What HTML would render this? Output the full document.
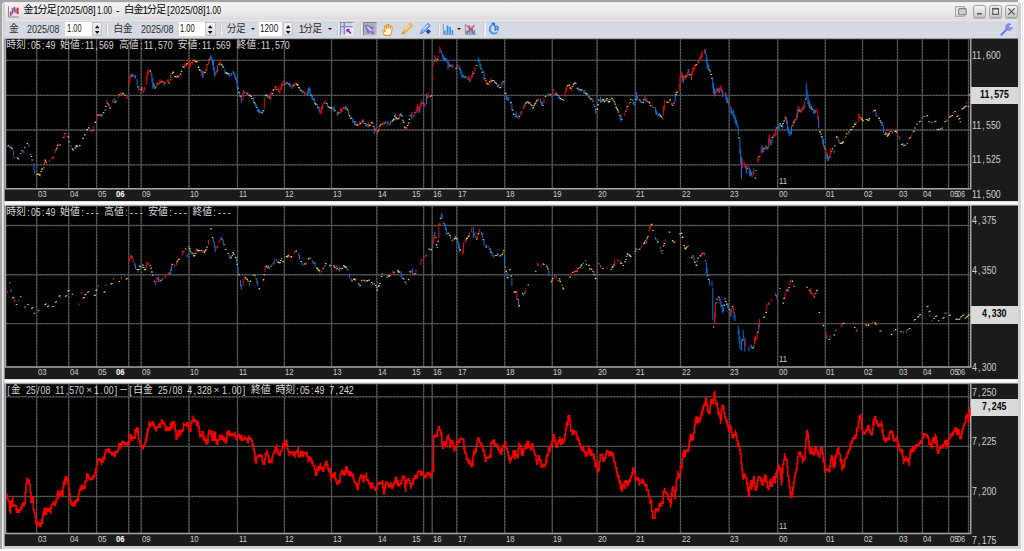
<!DOCTYPE html><html lang="ja"><head><meta charset="utf-8"><title>chart</title><style>
html,body{margin:0;padding:0}
body{width:1024px;height:551px;overflow:hidden;background:#fbfbfb;position:relative;font-family:"Liberation Sans",sans-serif}
#frame{position:absolute;left:0;top:0;width:1018.4px;height:548.6px;background:#a4a4a4}
#frame:before{content:"";position:absolute;left:1.7px;top:1.7px;width:1019.7px;height:547.5px;background:#d2d2d2;border-radius:3.5px 3px 0 0;box-shadow:inset 1px 1px 0 #e9e9e9}
#rline{position:absolute;left:1022.4px;top:2px;width:1px;height:547px;background:#e3e6ea}
#title{position:absolute;left:4.6px;top:2.8px;width:1013.8px;height:17.1px;background:linear-gradient(#f4f4f4,#ececec 40%,#dddddd)}
#tb{position:absolute;left:4.6px;top:19.9px;width:1013.8px;height:18.5px;background:#d4d9e2;border-top:1px solid #e6e9ee;box-sizing:border-box}
#charts{position:absolute;left:0;top:0}
.split{position:absolute;left:4.6px;width:1013.4px;height:4.4px;background:linear-gradient(#cfcfcf,#fff 30%,#fff 70%,#cfcfcf)}
.k,.ic{position:absolute;overflow:visible}
.t{position:absolute;white-space:pre;transform-origin:0 0;letter-spacing:0}
.m i{display:inline-block;width:.55615em;text-align:center;font-style:normal}
.pbox{position:absolute;left:971.4px;width:46.6px;background:#dadada}
.cb{position:absolute;top:4.8px;height:13.2px;border:1px solid #9e9e9e;border-radius:2.6px;box-sizing:border-box;background:linear-gradient(#f4f4f4,#dfdfdf 50%,#c9c9c9);box-shadow:0 .6px .8px rgba(0,0,0,.18)}
.inp{position:absolute;top:22.4px;height:13.8px;background:#fff}
.spin{position:absolute;top:22.4px;width:10.6px;height:13.8px;background:linear-gradient(#f2f2f2,#dcdcdc);border:1px solid #c2c6cc;box-sizing:border-box}
.sep{position:absolute;top:23px;width:1.3px;height:12.6px;background:#eef0f4;box-shadow:-.6px 0 0 #bcc1ca}
.dd{position:absolute;top:27.6px;width:0;height:0;border-left:2.1px solid transparent;border-right:2.1px solid transparent;border-top:2.6px solid #161616}
</style></head><body>
<div id="frame"></div><div id="rline"></div>
<svg id="charts" width="1024" height="551" viewBox="0 0 1024 551"><rect x="4.6" y="38.6" width="1013.4" height="162.4" fill="#1b1b1b"/><rect x="5.5" y="38.6" width="965.2" height="150.1" fill="#000"/><rect x="4.6" y="205.6" width="1013.4" height="173.4" fill="#1b1b1b"/><rect x="5.5" y="205.6" width="965.2" height="161.3" fill="#000"/><rect x="4.6" y="383.6" width="1013.4" height="162.4" fill="#1b1b1b"/><rect x="5.5" y="383.6" width="965.2" height="150.0" fill="#000"/><path d="M36.7 39.6V188.7M68.7 39.6V188.7M96.6 39.6V188.7M128.7 39.6V188.7M141.2 39.6V188.7M189.0 39.6V188.7M237.5 39.6V188.7M284.4 39.6V188.7M331.5 39.6V188.7M376.8 39.6V188.7M423.6 39.6V188.7M432.2 39.6V188.7M456.8 39.6V188.7M504.7 39.6V188.7M552.3 39.6V188.7M597.1 39.6V188.7M635.3 39.6V188.7M680.5 39.6V188.7M729.2 39.6V188.7M777.7 39.6V188.7M825.3 39.6V188.7M862.5 39.6V188.7M897.5 39.6V188.7M922.4 39.6V188.7M948.6 39.6V188.7M968.5 39.6V188.7M36.7 206.6V366.9M68.7 206.6V366.9M96.6 206.6V366.9M128.7 206.6V366.9M141.2 206.6V366.9M189.0 206.6V366.9M237.5 206.6V366.9M284.4 206.6V366.9M331.5 206.6V366.9M376.8 206.6V366.9M423.6 206.6V366.9M432.2 206.6V366.9M456.8 206.6V366.9M504.7 206.6V366.9M552.3 206.6V366.9M597.1 206.6V366.9M635.3 206.6V366.9M680.5 206.6V366.9M729.2 206.6V366.9M777.7 206.6V366.9M825.3 206.6V366.9M862.5 206.6V366.9M897.5 206.6V366.9M922.4 206.6V366.9M948.6 206.6V366.9M968.5 206.6V366.9M36.7 384.6V533.6M68.7 384.6V533.6M96.6 384.6V533.6M128.7 384.6V533.6M141.2 384.6V533.6M189.0 384.6V533.6M237.5 384.6V533.6M284.4 384.6V533.6M331.5 384.6V533.6M376.8 384.6V533.6M423.6 384.6V533.6M432.2 384.6V533.6M456.8 384.6V533.6M504.7 384.6V533.6M552.3 384.6V533.6M597.1 384.6V533.6M635.3 384.6V533.6M680.5 384.6V533.6M729.2 384.6V533.6M777.7 384.6V533.6M825.3 384.6V533.6M862.5 384.6V533.6M897.5 384.6V533.6M922.4 384.6V533.6M948.6 384.6V533.6M968.5 384.6V533.6M6.0 60.3H970.7M6.0 95.4H970.7M6.0 130.0H970.7M6.0 164.9H970.7M6.0 225.5H970.7M6.0 274.7H970.7M6.0 323.6H970.7M6.0 396.8H970.7M6.0 446.4H970.7M6.0 496.5H970.7" stroke="#404040" stroke-width="1.35" fill="none"/><path d="M36.7 39.6V188.7M68.7 39.6V188.7M96.6 39.6V188.7M128.7 39.6V188.7M141.2 39.6V188.7M189.0 39.6V188.7M237.5 39.6V188.7M284.4 39.6V188.7M331.5 39.6V188.7M376.8 39.6V188.7M423.6 39.6V188.7M432.2 39.6V188.7M456.8 39.6V188.7M504.7 39.6V188.7M552.3 39.6V188.7M597.1 39.6V188.7M635.3 39.6V188.7M680.5 39.6V188.7M729.2 39.6V188.7M777.7 39.6V188.7M825.3 39.6V188.7M862.5 39.6V188.7M897.5 39.6V188.7M922.4 39.6V188.7M948.6 39.6V188.7M968.5 39.6V188.7M36.7 206.6V366.9M68.7 206.6V366.9M96.6 206.6V366.9M128.7 206.6V366.9M141.2 206.6V366.9M189.0 206.6V366.9M237.5 206.6V366.9M284.4 206.6V366.9M331.5 206.6V366.9M376.8 206.6V366.9M423.6 206.6V366.9M432.2 206.6V366.9M456.8 206.6V366.9M504.7 206.6V366.9M552.3 206.6V366.9M597.1 206.6V366.9M635.3 206.6V366.9M680.5 206.6V366.9M729.2 206.6V366.9M777.7 206.6V366.9M825.3 206.6V366.9M862.5 206.6V366.9M897.5 206.6V366.9M922.4 206.6V366.9M948.6 206.6V366.9M968.5 206.6V366.9M36.7 384.6V533.6M68.7 384.6V533.6M96.6 384.6V533.6M128.7 384.6V533.6M141.2 384.6V533.6M189.0 384.6V533.6M237.5 384.6V533.6M284.4 384.6V533.6M331.5 384.6V533.6M376.8 384.6V533.6M423.6 384.6V533.6M432.2 384.6V533.6M456.8 384.6V533.6M504.7 384.6V533.6M552.3 384.6V533.6M597.1 384.6V533.6M635.3 384.6V533.6M680.5 384.6V533.6M729.2 384.6V533.6M777.7 384.6V533.6M825.3 384.6V533.6M862.5 384.6V533.6M897.5 384.6V533.6M922.4 384.6V533.6M948.6 384.6V533.6M968.5 384.6V533.6M6.0 60.3H970.7M6.0 95.4H970.7M6.0 130.0H970.7M6.0 164.9H970.7M6.0 225.5H970.7M6.0 274.7H970.7M6.0 323.6H970.7M6.0 396.8H970.7M6.0 446.4H970.7M6.0 496.5H970.7" stroke="#646464" stroke-width="1.0" stroke-dasharray="1.55 1.55" fill="none"/><path d="M5.5 38.6V188.7H970.7V38.6" fill="none" stroke="#a9a9a9" stroke-width="1.5"/><path d="M4.6 38.7H971.3" stroke="#b9b9b9" stroke-width="1.0"/><path d="M5.5 205.6V366.9H970.7V205.6" fill="none" stroke="#a9a9a9" stroke-width="1.5"/><path d="M4.6 205.7H971.3" stroke="#b9b9b9" stroke-width="1.0"/><path d="M5.5 383.6V533.6H970.7V383.6" fill="none" stroke="#a9a9a9" stroke-width="1.5"/><path d="M4.6 383.7H971.3" stroke="#b9b9b9" stroke-width="1.0"/><path d="M8.4 145.1V146.3M10.1 146.4V147.7M11.7 147.6V148.7M12.5 148.5V149.3M14.2 156.7V157.6M17.5 157.2V158.2M18.3 158.2V159.5M20.7 153.2V154.0M21.6 150.0V150.7M24.8 147.2V148.2M27.3 142.9V143.9M30.6 154.2V154.9M31.4 156.0V157.0M32.2 159.4V160.6M36.3 174.4V175.1M38.0 173.6V175.0M38.8 173.6V174.8M39.6 174.4V175.8M41.2 171.1V172.1M42.1 168.3V169.8M43.7 167.4V168.2M45.3 159.6V160.9M46.2 161.6V162.7M52.7 157.4V158.1M56.0 149.5V150.4M56.8 147.4V148.8M57.6 144.8V146.1M60.1 144.6V145.6M63.4 137.0V137.8M65.0 133.2V134.1M68.3 136.2V137.6M69.1 141.2V142.2M70.8 145.7V146.4M72.4 148.3V149.5M73.2 149.2V150.6M74.9 147.8V148.6M75.7 146.6V147.4M76.5 145.0V146.1M77.3 145.7V147.0M79.8 145.0V146.2M83.1 137.7V139.0M84.7 134.2V135.6M87.2 129.0V130.5M88.8 127.3V128.4M92.9 130.0V130.9M95.4 121.6V123.0M97.8 114.4V115.5M98.6 114.8V115.8M100.3 114.6V115.4M101.9 114.2V115.6M103.6 112.0V113.2M105.2 109.7V110.5M106.0 106.1V107.1M107.7 102.7V103.7M108.5 104.2V105.1M110.1 107.2V108.5M115.0 102.1V103.1M115.9 100.4V101.6M119.1 94.2V94.9M120.0 94.4V95.2M122.4 93.4V94.4M123.2 92.7V94.1M124.9 94.7V96.1M131.4 75.1V76.5M138.0 86.2V87.4M141.3 88.8V90.1M142.1 87.5V88.2M150.3 70.2V71.7M155.2 87.6V88.6M156.0 86.4V87.2M157.7 83.3V84.5M161.0 81.4V82.8M162.6 81.0V81.8M165.1 82.6V83.6M169.2 82.3V83.6M172.4 72.9V74.0M173.3 71.6V72.9M174.9 76.0V77.3M175.7 75.9V77.2M177.4 75.6V76.8M178.2 76.0V77.3M180.6 73.4V74.7M181.5 70.7V71.9M183.1 66.2V67.3M183.9 66.7V67.7M185.6 65.6V66.3M186.4 63.5V64.8M187.2 63.1V64.0M192.1 62.1V63.1M193.8 59.7V61.1M195.4 60.6V61.9M196.2 61.7V62.6M197.0 61.2V62.3M198.7 66.6V67.9M199.5 69.3V70.6M200.3 70.2V71.1M204.4 72.1V73.1M205.2 71.7V72.7M206.1 69.5V70.4M207.7 64.5V65.3M209.3 58.8V59.7M219.2 63.6V65.1M221.6 64.1V65.5M223.3 66.3V67.8M225.7 72.8V73.7M226.6 72.1V73.3M227.4 72.9V74.0M228.2 73.1V74.4M238.0 87.4V88.7M238.9 91.7V93.0M240.5 95.6V97.0M244.6 92.3V93.1M247.1 92.7V94.2M249.5 94.6V96.0M250.3 95.4V96.3M251.2 96.1V97.0M252.0 97.9V99.1M254.4 101.9V103.4M256.9 107.0V108.1M261.8 111.9V113.1M263.5 110.0V111.2M265.9 95.1V96.2M266.7 94.5V95.9M269.2 96.4V97.6M270.0 97.7V98.6M272.5 93.0V94.0M273.3 89.4V90.8M274.1 88.9V89.9M275.8 86.6V87.5M276.6 88.8V89.7M282.3 84.5V85.5M285.6 83.7V84.6M287.2 82.5V83.4M288.1 82.9V83.6M288.9 83.9V84.7M293.8 84.6V85.9M296.3 83.2V84.0M297.1 84.1V85.4M297.9 84.6V85.7M298.7 87.1V88.2M299.5 87.6V88.5M300.4 89.4V90.5M301.2 90.2V91.1M302.8 91.2V92.4M306.9 93.8V94.6M311.0 94.6V95.9M313.5 98.9V99.8M315.1 102.7V103.8M315.9 103.6V105.0M318.4 107.1V108.1M324.1 102.8V103.5M326.6 102.9V103.9M328.2 106.0V106.8M329.1 107.2V108.2M329.9 106.8V107.9M330.7 107.5V108.4M331.5 107.1V107.8M332.3 108.5V109.3M334.8 109.7V111.2M338.1 112.5V113.8M338.9 112.6V113.5M343.8 107.6V108.6M347.1 108.6V109.6M347.9 109.8V110.8M349.6 115.0V116.5M350.4 117.6V118.6M351.2 117.4V118.7M353.7 121.3V122.1M356.1 123.8V124.7M356.9 125.0V125.7M357.8 124.3V125.4M360.2 122.9V124.3M361.0 122.4V123.3M362.7 120.8V122.2M365.1 123.1V123.9M366.0 124.7V125.6M367.6 124.3V125.1M369.2 124.8V126.2M370.1 124.8V126.0M371.7 122.3V123.4M372.5 122.3V123.5M373.3 125.9V126.7M375.0 128.8V130.2M378.3 130.0V131.4M379.9 125.6V126.7M380.7 124.2V125.2M382.4 123.5V124.4M384.8 122.5V123.5M392.2 120.7V121.7M393.0 119.8V121.0M393.8 118.6V119.9M394.7 115.6V116.7M396.3 117.0V118.3M397.1 118.2V119.3M397.9 118.6V119.6M398.8 118.1V118.8M400.4 114.1V115.6M402.0 115.3V116.6M402.9 119.7V120.8M403.7 121.4V122.9M404.5 126.6V127.6M405.3 127.0V128.5M407.8 125.0V126.0M408.6 122.6V123.7M409.4 118.7V119.9M410.2 114.9V115.7M415.2 112.2V113.1M422.5 102.7V103.5M427.5 96.5V97.4M430.7 95.9V96.8M431.6 95.0V95.8M434.0 60.4V61.3M436.5 60.7V61.6M437.3 58.8V60.1M444.7 58.1V59.2M449.6 65.8V66.5M450.4 64.8V65.8M456.2 67.8V68.9M465.2 76.5V77.4M473.4 72.7V74.0M476.7 65.0V65.9M481.6 68.6V69.5M482.4 71.6V72.7M484.9 78.1V78.9M485.7 80.3V81.2M487.3 83.1V84.0M488.1 83.6V84.8M489.8 81.1V82.6M491.4 80.9V81.8M492.2 80.0V80.9M493.9 80.1V81.1M495.5 82.1V83.3M496.3 82.9V84.0M498.0 85.3V86.7M499.6 87.2V88.3M500.4 87.1V88.0M503.7 81.3V82.2M505.4 92.7V94.0M511.1 102.0V103.3M512.7 109.5V110.7M513.6 113.5V114.9M517.7 116.9V117.6M519.3 115.8V116.9M525.0 104.7V105.8M525.9 102.2V103.7M527.5 101.2V102.4M528.3 101.7V102.8M529.1 102.5V103.7M530.0 102.6V103.4M530.8 104.3V105.1M531.6 104.9V106.3M533.2 107.1V108.6M534.1 104.8V106.2M534.9 103.2V104.6M535.7 102.5V103.5M536.5 100.8V101.7M537.3 99.5V100.8M543.1 105.0V106.0M545.5 95.9V97.1M550.5 93.9V95.2M555.4 93.5V94.8M557.0 93.7V94.8M557.8 95.0V95.8M560.3 97.8V99.2M561.9 98.9V99.9M563.6 99.4V100.5M567.7 85.0V86.5M569.3 84.6V85.8M570.1 87.2V88.6M571.0 88.1V88.9M572.6 86.1V87.0M573.4 84.3V85.3M574.2 82.9V83.9M575.1 81.9V82.6M575.9 83.0V83.8M577.5 87.7V89.1M579.2 88.9V89.9M580.8 89.2V90.5M581.6 89.4V90.8M585.7 92.5V94.0M586.5 93.7V94.5M587.4 93.6V94.7M589.0 96.3V97.4M590.6 98.2V99.4M591.5 98.3V99.5M593.9 104.6V105.3M594.7 106.1V106.8M597.2 108.5V109.9M598.0 103.9V105.2M598.8 99.6V100.7M602.1 100.3V101.6M602.9 98.8V99.8M603.8 99.4V100.8M604.6 101.1V102.3M606.2 99.5V100.8M607.0 97.9V99.2M607.9 100.4V101.3M608.7 101.2V102.5M609.5 100.7V102.0M610.3 99.3V100.0M612.0 97.8V99.1M612.8 99.5V100.2M613.6 99.7V100.6M614.4 101.3V102.4M615.2 103.6V104.7M616.1 106.5V107.7M616.9 107.9V109.3M617.7 109.5V111.0M618.5 111.5V112.5M619.3 114.9V115.8M621.8 118.7V119.9M625.9 110.8V111.6M627.5 105.7V107.1M630.0 102.0V102.7M630.8 99.0V99.9M635.7 99.1V100.0M639.8 99.6V100.8M643.1 101.8V103.1M643.9 99.1V100.2M647.2 100.8V101.8M648.9 101.6V102.8M649.7 102.3V103.5M650.5 105.1V106.1M653.8 106.9V107.6M660.3 114.8V116.1M661.2 115.9V117.1M662.0 117.3V118.1M666.9 101.4V102.4M667.7 101.9V102.9M670.2 99.3V100.7M671.8 103.6V104.4M672.6 105.2V106.1M674.3 102.6V103.5M675.9 93.8V95.2M676.7 91.8V93.0M677.6 91.4V92.3M685.8 76.1V77.3M686.6 75.4V76.3M689.9 73.9V75.3M695.6 65.1V66.1M696.4 64.1V65.1M709.5 69.5V70.7M710.4 71.4V72.3M711.2 74.1V74.9M712.0 77.7V79.1M717.7 89.4V90.7M732.5 111.7V112.5M739.1 137.3V138.6M747.3 168.2V169.1M755.5 177.5V178.8M756.3 170.2V171.0M759.6 155.9V157.0M764.5 148.3V149.0M766.1 146.5V147.6M767.8 147.4V148.6M772.7 136.8V138.0M776.8 127.3V128.8M780.1 123.3V124.5M780.9 125.2V126.2M781.7 125.5V126.9M783.3 123.1V124.1M784.2 120.2V121.7M785.8 117.6V118.8M789.9 132.4V133.1M792.4 125.2V126.1M794.0 121.6V123.0M794.8 119.8V120.5M795.6 119.6V120.3M799.7 109.8V111.2M805.5 98.8V99.8M811.2 106.6V107.7M812.0 108.3V109.8M820.2 131.1V132.6M821.1 133.4V134.5M821.9 136.1V137.5M824.3 146.4V147.6M825.2 148.5V149.4M829.3 156.4V157.5M831.7 150.9V151.7M832.5 148.3V149.4M835.0 145.6V146.4M836.6 136.3V137.7M837.5 136.7V137.6M839.9 142.5V143.3M840.7 143.2V144.0M841.6 142.8V144.1M842.4 142.0V143.5M843.2 141.3V142.6M845.7 136.5V137.3M846.5 133.3V134.2M848.9 131.4V132.6M850.6 129.3V130.2M851.4 129.0V130.0M853.0 126.4V127.6M853.9 125.9V126.7M854.7 123.5V125.0M855.5 123.6V124.8M856.3 121.9V122.6M861.2 117.4V118.6M862.1 119.1V120.3M862.9 119.9V121.3M866.2 119.0V119.8M867.0 118.9V120.0M867.8 119.6V120.6M868.6 120.0V120.9M869.4 118.1V119.4M874.4 110.3V111.3M875.2 109.8V111.3M876.8 115.4V116.3M879.3 117.7V119.0M880.1 120.2V121.1M880.9 121.5V122.8M885.0 134.0V134.9M885.8 132.5V133.7M886.7 133.5V134.2M887.5 135.3V136.7M888.3 134.0V135.4M889.1 132.8V134.3M890.8 130.9V131.7M894.9 131.0V132.0M895.7 130.4V131.7M896.5 131.4V132.7M901.8 144.1V145.0M902.7 143.5V144.4M903.6 145.4V146.3M904.5 144.8V145.7M907.4 142.9V143.8M909.5 137.8V138.7M910.4 137.2V138.1M913.3 131.4V132.3M914.2 130.8V131.7M915.1 127.6V128.5M917.1 123.8V124.7M919.6 121.3V122.2M920.5 120.7V121.6M924.0 116.2V117.1M926.5 115.7V116.6M927.4 115.1V116.0M929.0 121.3V122.2M931.6 121.8V122.7M934.9 121.3V122.2M935.8 120.7V121.6M937.4 129.4V130.3M938.3 128.8V129.7M940.0 128.9V129.8M940.9 128.3V129.2M945.1 121.3V122.2M946.0 120.7V121.6M949.4 116.7V117.6M950.3 116.1V117.0M951.4 115.7V116.6M952.3 115.1V116.0M955.2 111.1V112.0M957.0 116.2V117.1M957.9 115.6V116.5M958.8 118.7V119.6M959.7 118.1V119.0M960.3 121.3V122.2M962.1 108.6V109.5M963.0 108.0V108.9M963.9 107.3V108.2M964.8 106.7V107.6M965.4 106.0V106.9M966.3 105.4V106.3M968.4 106.0V106.9M969.2 94.6V95.5M970.1 94.0V94.9" stroke="#dcd266" stroke-width="1.5" fill="none"/><path d="M7.6 145.2V146.7M10.9 145.7V148.8M13.4 150.7V155.7M19.1 159.0V159.6M22.4 150.9V152.6M23.2 150.2V152.2M24.0 151.7V153.6M28.9 144.1V147.0M33.9 163.5V170.0M34.7 169.4V173.7M79.0 146.3V147.1M90.4 129.9V131.6M101.1 114.0V117.0M109.3 104.9V107.5M114.2 98.0V103.4M124.1 93.8V95.6M132.3 73.1V76.2M133.1 74.6V77.3M134.7 75.1V77.4M135.5 75.4V78.5M137.2 79.0V85.2M138.8 85.6V90.4M143.7 90.4V92.9M151.1 71.6V75.4M151.9 73.5V82.1M152.8 77.8V88.8M153.6 82.6V87.3M154.4 83.8V88.8M164.2 81.3V85.7M176.5 76.0V78.3M201.1 70.1V72.6M202.0 70.0V76.7M202.8 71.7V78.3M210.2 56.1V58.5M211.0 54.9V59.2M211.8 56.9V60.2M212.6 59.4V65.1M213.4 59.9V70.7M214.3 66.8V76.2M215.1 71.6V76.3M217.5 65.3V71.8M222.5 64.2V67.5M224.9 68.9V73.6M229.0 73.5V76.3M229.8 73.1V76.7M231.5 73.1V75.8M233.1 70.6V74.7M233.9 71.7V75.0M234.8 72.9V77.2M235.6 75.9V80.1M236.4 77.5V83.1M237.2 81.4V87.8M239.7 92.2V96.5M241.3 95.3V102.4M247.9 91.9V94.7M253.6 97.3V102.3M255.3 102.7V106.3M256.1 104.1V107.5M257.7 108.9V111.7M258.5 108.6V112.3M259.4 110.0V113.7M260.2 110.2V112.9M262.6 110.5V114.2M267.6 95.2V98.2M268.4 94.9V96.5M284.8 81.1V83.4M286.4 81.8V83.9M289.7 82.9V86.8M290.5 84.2V87.3M292.2 85.0V88.6M295.4 82.9V83.9M302.0 89.5V92.8M307.7 90.8V94.7M308.6 87.9V94.2M309.4 87.2V91.8M310.2 89.1V95.3M311.8 93.9V99.2M312.7 95.8V99.6M314.3 97.9V103.0M317.6 104.3V108.9M319.2 107.5V112.1M327.4 102.9V107.1M333.2 107.6V109.7M334.0 106.4V112.1M337.3 111.4V115.9M345.5 105.5V110.0M346.3 106.5V109.3M348.7 111.3V115.2M352.8 118.1V122.9M354.5 121.7V125.4M355.3 120.9V124.7M363.5 119.3V122.6M366.8 124.2V127.1M374.2 125.0V133.8M377.4 131.0V134.9M385.6 121.0V123.4M387.3 121.8V124.3M388.1 121.5V125.5M390.6 120.7V124.5M395.5 113.8V120.5M401.2 112.6V116.9M411.1 114.6V116.8M411.9 112.1V119.1M418.4 106.5V110.6M419.3 106.5V113.0M423.4 102.2V105.6M424.2 103.1V106.5M426.6 93.3V104.5M435.7 56.7V61.2M440.6 49.2V51.7M441.4 50.4V54.1M442.2 53.2V57.5M443.0 54.7V59.8M443.9 55.4V61.4M445.5 57.8V61.4M446.3 58.5V61.1M447.1 59.6V63.0M448.0 60.6V69.7M448.8 61.7V66.4M451.2 64.4V66.6M452.9 64.7V67.9M457.0 64.9V68.7M459.4 65.5V70.0M460.3 67.8V74.8M461.9 70.6V78.0M462.7 74.3V78.1M463.5 75.0V77.0M464.4 75.8V78.2M466.8 76.5V78.6M469.3 78.6V81.2M470.1 78.4V82.1M478.3 57.6V62.0M479.1 58.9V62.6M479.9 62.2V67.4M480.8 63.9V69.4M484.0 70.5V80.2M494.7 80.7V83.1M497.2 83.6V85.9M498.8 84.3V87.0M502.9 80.9V84.8M506.2 92.4V100.0M507.0 96.5V100.2M507.8 97.3V100.7M508.6 96.8V100.5M510.3 101.1V104.3M511.9 104.3V110.5M515.2 114.1V117.5M516.0 111.4V117.1M516.8 114.7V117.6M520.9 111.1V115.6M540.6 98.6V103.0M541.4 101.6V105.7M542.3 101.7V105.0M548.0 93.5V96.6M548.8 93.0V95.3M552.1 94.8V97.6M556.2 92.0V95.1M558.7 96.3V98.9M559.5 95.2V98.6M578.3 87.8V90.9M580.0 88.5V91.7M583.3 90.4V92.6M584.1 90.6V93.8M584.9 90.1V92.5M589.8 95.7V99.3M592.3 98.8V101.6M593.1 100.1V102.7M595.6 108.1V113.8M600.5 96.7V102.9M601.3 99.1V102.4M620.2 114.9V119.7M621.0 114.0V121.9M632.5 99.3V101.2M633.3 101.6V104.5M634.1 101.8V105.2M634.9 104.2V106.1M636.6 91.9V101.1M637.4 95.8V99.6M640.7 100.5V102.6M641.5 100.9V103.1M645.6 97.4V100.8M646.4 98.6V101.9M655.4 107.1V112.9M656.2 109.9V115.4M657.1 111.3V113.7M657.9 112.9V115.6M658.7 114.1V115.4M659.5 113.0V116.7M675.1 94.9V102.0M682.5 74.3V81.0M683.3 75.6V83.6M688.2 68.6V75.6M689.0 70.4V72.5M698.1 59.4V63.7M705.4 49.2V54.1M706.3 53.7V63.0M707.1 57.8V68.9M707.9 62.8V69.0M708.7 64.9V70.8M712.8 77.4V88.4M713.6 82.9V93.7M714.5 88.4V96.6M716.9 87.8V92.3M719.4 88.2V93.2M721.8 88.3V92.6M722.7 90.4V97.3M725.9 92.6V99.9M726.8 95.7V103.2M727.6 97.6V103.0M728.4 100.6V104.6M730.9 106.1V113.6M731.7 108.3V115.0M733.3 110.0V116.9M734.1 113.5V118.8M735.0 115.7V122.6M735.8 116.9V124.6M736.6 120.3V125.2M737.4 124.1V127.4M738.2 125.9V135.4M739.9 138.6V153.7M740.7 149.2V164.3M741.5 157.0V179.0M745.6 164.0V168.9M746.4 166.3V173.8M749.7 167.8V175.5M750.5 169.5V176.7M751.4 171.9V175.5M753.8 168.3V174.5M762.0 145.2V152.0M762.8 147.9V152.8M763.7 147.3V152.2M766.9 146.9V150.2M770.2 139.5V145.4M771.0 141.0V145.5M771.9 136.5V143.0M777.6 125.8V131.4M778.4 126.3V128.8M779.2 122.8V129.7M782.5 123.8V128.5M786.6 117.3V123.8M787.4 120.6V131.1M788.3 126.9V133.4M789.1 130.0V136.4M790.7 131.7V135.3M791.5 126.1V134.3M797.3 108.9V118.0M798.9 107.2V111.9M800.6 110.5V112.5M803.8 104.7V109.5M806.3 82.5V99.2M807.1 89.6V94.8M807.9 93.6V104.0M808.8 99.1V106.1M809.6 101.2V108.4M810.4 104.3V108.8M813.7 109.1V113.9M814.5 109.4V113.4M815.3 110.0V113.4M818.6 116.2V127.6M822.7 136.7V143.7M823.5 139.3V146.4M826.8 153.0V158.8M827.6 154.2V160.8M828.4 157.0V161.0M834.2 150.0V153.3M839.1 140.1V143.6M876.0 111.6V116.1M878.5 116.9V119.0M881.7 122.5V125.6M882.6 122.4V125.8M883.4 125.4V132.8M892.4 131.3V133.7M899.8 136.5V139.9M905.7 143.5V145.7M942.5 127.0V129.1" stroke="#0b72de" stroke-width="1.0" fill="none"/><path d="M40.4 173.2V176.6M44.5 159.6V165.2M49.4 159.8V161.9M51.9 157.6V159.6M53.5 156.3V159.1M55.2 150.0V153.0M58.5 143.6V146.2M64.2 134.6V138.0M65.8 133.1V134.8M91.3 130.1V131.5M92.1 129.7V132.2M93.7 126.2V129.3M97.0 114.0V118.8M106.8 100.0V103.9M112.6 99.6V102.9M118.3 95.2V97.7M120.8 92.3V95.2M121.6 92.1V94.0M126.5 96.7V98.8M127.3 96.2V98.0M129.0 80.2V86.1M129.8 76.3V82.8M130.6 74.4V78.3M139.6 88.6V90.3M140.5 88.7V91.0M142.9 87.9V92.2M144.6 86.8V90.7M146.2 76.4V84.8M147.0 72.0V81.5M147.8 70.5V76.4M148.7 68.9V73.8M156.9 82.3V86.3M159.3 80.6V84.5M160.1 79.1V83.5M161.8 80.1V81.6M163.4 81.2V83.3M167.5 79.5V82.4M168.3 79.3V83.1M170.8 73.6V81.2M179.0 74.3V77.9M184.7 63.4V68.3M188.0 62.1V65.5M188.8 59.8V64.2M189.7 61.2V68.4M190.5 63.0V66.9M192.9 60.5V64.6M194.6 60.2V61.8M203.6 70.6V76.8M206.9 63.8V69.5M208.5 59.1V64.3M215.9 71.6V74.5M216.7 69.7V73.1M220.0 61.5V65.9M220.8 61.7V65.2M243.0 91.2V101.1M243.8 89.7V96.5M264.3 97.5V108.8M270.8 92.4V100.1M271.7 91.9V95.1M274.9 85.5V89.8M278.2 86.4V92.2M279.0 89.4V93.3M279.9 90.0V93.5M280.7 87.3V90.5M281.5 83.6V89.5M283.1 80.7V86.0M284.0 80.7V84.0M293.0 83.8V88.8M294.6 83.2V85.8M304.5 91.9V95.1M305.3 91.4V93.7M320.0 108.7V114.1M320.9 110.7V114.4M321.7 105.9V113.6M322.5 103.9V109.4M325.0 101.5V103.5M325.8 100.3V102.9M340.5 108.6V113.0M341.4 108.2V112.5M342.2 107.8V111.7M344.6 107.2V109.2M359.4 121.3V125.2M361.9 119.5V123.5M368.4 122.3V127.6M375.8 129.6V131.9M376.6 129.4V133.7M379.1 125.4V131.3M383.2 121.5V123.5M384.0 122.0V125.0M389.7 122.8V125.8M399.6 113.6V119.0M406.1 126.7V130.4M407.0 126.8V129.4M413.5 115.3V117.3M414.3 112.5V116.4M416.0 109.6V113.7M416.8 106.0V111.8M417.6 104.1V112.7M420.1 102.7V112.0M420.9 102.6V107.7M421.7 100.2V106.2M425.0 103.4V107.4M428.3 92.4V97.0M429.1 94.7V97.8M432.4 76.2V80.8M433.2 61.9V66.6M434.8 55.1V60.0M438.1 55.6V60.7M439.8 46.6V53.7M452.1 64.4V68.2M457.8 63.8V68.7M467.6 78.2V79.5M468.5 76.0V79.9M470.9 76.4V80.4M471.7 74.9V78.1M472.6 70.9V77.0M475.0 66.9V71.7M486.5 81.2V84.9M489.0 82.9V85.1M490.6 78.1V83.2M501.3 82.3V86.8M518.5 115.2V118.7M521.8 110.8V114.2M523.4 106.1V108.9M524.2 104.0V108.1M538.2 98.4V100.9M543.9 98.3V103.6M552.9 92.0V96.3M553.7 88.7V92.7M565.2 91.4V96.5M566.0 87.4V92.4M566.9 85.5V91.1M571.8 85.9V91.2M624.3 112.7V115.9M626.7 106.2V110.1M629.2 102.3V105.1M639.0 98.6V100.5M644.8 95.4V101.0M652.1 105.0V107.4M653.0 106.8V108.2M662.8 117.5V120.3M663.6 106.0V115.6M664.4 99.9V109.9M669.4 100.5V103.3M673.5 102.8V104.9M679.2 84.0V90.6M680.0 76.1V86.2M680.8 71.8V83.2M681.7 72.0V77.9M684.1 75.9V79.4M684.9 74.8V79.7M687.4 71.9V76.0M691.5 72.4V80.0M692.3 68.1V76.0M693.1 67.4V72.2M694.0 66.4V71.6M694.8 64.1V69.5M698.9 59.4V63.3M699.7 57.4V60.7M700.5 55.5V59.7M701.3 53.5V58.4M702.2 50.5V57.2M704.6 49.2V53.7M715.3 91.0V95.5M716.1 90.1V93.5M718.6 87.6V93.2M720.2 85.5V91.5M721.0 85.7V90.3M724.3 93.7V96.0M725.1 92.3V96.3M729.2 101.6V107.7M742.3 158.5V168.6M744.0 161.4V164.8M744.8 163.0V167.6M748.1 165.8V169.7M748.9 166.5V168.5M752.2 174.6V177.0M753.0 170.9V174.5M757.9 157.1V162.8M758.7 155.6V160.9M761.2 147.0V154.5M765.3 145.8V150.2M768.6 138.1V147.2M769.4 134.3V143.2M773.5 134.2V137.5M774.3 133.6V135.9M775.1 131.0V136.4M776.0 126.3V135.5M785.0 115.7V121.8M793.2 121.2V126.9M796.5 113.6V120.0M798.1 105.6V113.4M801.4 108.3V112.7M802.2 107.3V110.7M803.0 106.6V110.5M804.7 101.4V108.2M816.1 108.4V112.1M817.8 110.2V119.6M826.0 149.2V155.2M830.1 148.8V158.7M830.9 148.1V153.4M838.3 137.5V141.1M848.1 132.7V135.0M852.2 125.9V128.3M858.8 114.1V122.1M859.6 113.8V118.6M860.4 116.9V119.6M873.5 109.9V112.4M889.9 130.1V132.2M891.6 129.8V131.4M897.3 132.1V136.0M898.0 135.8V138.1M911.2 134.7V136.7M921.9 116.8V119.0M947.3 119.4V121.5M953.2 111.5V114.1M966.7 101.6V103.7" stroke="#ee0606" stroke-width="1.0" fill="none"/><path d="M137.2 269.0V270.1M138.8 269.0V270.0M139.6 265.6V266.8M140.5 266.7V267.5M142.9 264.4V265.8M143.7 267.0V268.0M144.6 269.1V270.3M145.4 268.8V270.0M150.3 265.2V266.3M151.1 267.5V268.7M151.9 271.3V272.8M152.8 274.8V275.7M154.4 280.7V281.8M157.7 278.5V279.3M161.0 279.7V281.1M162.6 278.4V279.2M169.2 273.5V274.2M172.4 263.8V264.9M177.4 260.7V262.2M178.2 259.5V260.3M179.0 258.9V260.0M183.1 251.2V252.0M185.6 248.6V249.6M188.8 246.2V246.9M189.7 248.1V249.4M190.5 250.5V251.7M191.3 252.5V253.4M192.9 252.7V254.1M193.8 255.1V256.4M194.6 254.9V256.2M195.4 252.8V253.9M197.0 249.2V250.5M197.9 249.9V251.2M198.7 250.5V251.4M199.5 250.1V251.0M201.1 250.1V251.1M202.0 250.5V251.6M204.4 251.5V252.9M205.2 250.1V251.4M206.1 249.2V250.0M206.9 246.4V247.8M211.0 228.2V229.4M212.6 236.9V238.2M222.5 239.5V240.3M224.1 244.2V245.2M225.7 249.0V250.0M228.2 252.9V254.1M230.7 257.5V258.4M231.5 256.4V257.6M232.3 254.8V255.7M233.1 252.1V253.4M233.9 253.8V254.8M235.6 256.9V258.3M237.2 264.0V264.9M238.9 274.0V275.3M245.4 277.0V278.4M247.1 278.5V280.0M247.9 280.4V281.5M250.3 280.8V282.0M253.6 274.6V275.6M255.3 275.4V276.2M256.1 278.5V279.2M259.4 287.9V289.4M263.5 279.1V280.4M264.3 274.3V275.2M265.9 266.4V267.3M266.7 265.5V266.7M267.6 267.0V267.8M269.2 267.6V268.5M270.8 265.9V266.7M278.2 261.6V263.0M279.9 262.0V263.5M280.7 260.1V261.1M281.5 258.2V259.2M283.1 261.1V262.2M286.4 256.0V257.3M287.2 256.2V257.5M288.1 255.1V256.5M291.3 256.0V257.4M296.3 250.3V251.4M301.2 261.1V262.0M304.5 263.5V264.5M305.3 263.2V264.4M308.6 258.1V259.4M310.2 257.6V258.3M314.3 262.4V263.5M316.8 267.3V268.6M317.6 268.6V269.6M318.4 269.2V270.2M319.2 270.1V271.5M323.3 267.7V268.7M325.0 265.7V266.6M325.8 262.9V264.2M329.9 264.8V266.3M334.0 265.2V266.4M334.8 266.7V267.9M337.3 267.9V269.0M338.9 269.0V269.8M340.5 268.6V269.3M342.2 267.7V269.1M343.8 265.0V266.4M344.6 266.0V267.3M345.5 266.9V268.0M346.3 266.4V267.4M347.1 268.7V269.6M352.0 280.3V281.5M353.7 278.7V280.1M354.5 278.4V279.6M355.3 279.2V280.6M358.6 283.3V284.6M360.2 285.0V286.1M361.9 279.7V281.1M364.3 279.8V281.1M366.8 280.5V281.4M367.6 280.1V281.5M369.2 279.4V280.4M371.7 282.1V283.1M374.2 283.5V284.4M375.8 285.1V285.9M376.6 287.0V287.7M377.4 289.3V290.4M378.3 286.2V287.1M379.1 284.9V286.3M379.9 282.9V283.9M381.5 276.1V277.1M382.4 273.4V274.3M387.3 276.8V277.5M388.1 275.4V276.1M388.9 275.7V276.9M389.7 275.0V276.4M393.8 271.8V272.9M397.9 270.1V271.6M398.8 271.3V272.7M399.6 271.4V272.4M402.9 277.9V278.9M403.7 278.6V279.6M405.3 281.4V282.4M408.6 278.7V280.2M410.2 271.1V272.4M414.3 273.7V274.6M415.2 273.0V274.1M429.1 248.5V249.8M430.7 249.6V250.4M431.6 248.7V249.4M435.7 237.3V238.1M436.5 244.1V245.5M437.3 247.2V247.9M438.1 240.7V242.1M439.8 223.8V224.5M440.6 217.7V219.1M443.9 222.7V223.8M448.0 233.1V233.9M449.6 234.5V236.0M452.1 239.9V240.8M454.5 238.0V239.4M455.3 236.4V237.5M456.2 237.7V238.9M457.0 238.1V239.4M460.3 249.1V250.5M466.0 239.3V240.6M466.8 237.6V239.0M467.6 237.5V238.5M468.5 235.6V237.1M475.8 236.5V237.3M476.7 238.6V239.8M478.3 233.0V234.4M483.2 238.9V240.2M489.8 248.7V249.4M491.4 251.7V253.0M495.5 255.2V256.0M496.3 255.0V256.1M500.4 255.2V256.5M502.1 254.1V255.3M502.9 252.6V253.4M503.7 250.3V251.2M505.4 266.8V267.6M506.2 270.5V272.0M507.8 277.1V278.4M509.5 269.4V270.4M510.3 269.3V270.0M511.1 275.6V276.8M514.4 291.4V292.9M516.0 291.0V292.4M517.7 299.0V299.9M519.3 305.1V306.4M522.6 293.1V294.3M525.0 292.6V293.4M528.3 284.6V285.6M535.7 270.7V271.7M543.1 263.4V264.3M543.9 264.1V265.0M547.2 266.3V267.6M548.0 268.3V269.5M551.3 281.4V282.6M552.1 279.7V280.8M552.9 278.0V278.9M558.7 279.9V280.7M559.5 278.3V279.5M560.3 280.8V282.2M561.9 284.8V285.6M562.8 287.5V288.4M563.6 288.5V289.6M570.1 276.4V277.8M572.6 271.7V273.1M575.9 271.1V272.0M578.3 268.2V269.2M580.0 267.0V267.9M580.8 265.5V266.6M581.6 264.2V265.6M583.3 262.7V263.4M585.7 260.5V261.2M586.5 263.7V264.7M589.0 264.8V266.1M589.8 268.3V269.4M591.5 268.8V269.9M593.1 270.7V271.9M594.7 274.3V275.4M595.6 277.8V279.2M598.8 263.4V264.3M602.9 268.0V269.1M611.1 269.2V270.0M612.0 267.6V268.3M612.8 266.0V267.4M613.6 264.6V265.5M621.0 262.4V263.9M621.8 262.5V263.6M623.4 265.0V265.9M625.1 260.9V262.3M625.9 258.9V259.9M626.7 255.8V256.8M627.5 253.3V254.8M629.2 254.2V255.4M630.0 255.2V256.4M630.8 255.7V257.1M634.9 251.2V251.9M635.7 248.6V249.4M639.0 249.0V249.7M639.8 248.4V249.4M643.9 243.1V244.2M644.8 241.6V243.0M645.6 240.3V241.1M647.2 237.4V238.7M648.0 236.1V237.1M651.3 223.8V225.3M652.1 223.8V224.5M653.0 230.0V231.1M657.9 241.3V242.7M661.2 250.5V251.6M662.0 252.9V253.6M662.8 250.4V251.1M663.6 245.3V246.5M664.4 243.1V244.1M669.4 231.6V232.8M672.6 240.1V241.5M674.3 241.6V243.1M680.0 233.2V234.6M680.8 233.3V234.1M681.7 232.7V234.1M682.5 236.6V237.9M684.1 245.1V246.2M684.9 247.4V248.8M685.8 248.0V249.4M686.6 246.5V248.0M688.2 245.7V246.5M691.5 257.3V258.2M693.1 255.5V256.5M694.8 261.4V262.9M696.4 264.5V266.0M697.2 260.7V261.4M698.1 257.5V258.8M700.5 255.1V256.5M702.2 253.3V254.3M705.4 260.5V261.2M707.9 274.9V275.7M708.7 278.7V280.0M713.6 326.5V327.6M716.1 302.4V303.2M716.9 298.8V299.8M718.6 296.6V297.8M721.8 305.1V306.2M724.3 304.5V305.9M725.1 298.5V299.6M725.9 301.0V301.9M726.8 303.5V304.9M729.2 308.8V310.1M732.5 306.1V307.2M742.3 339.5V340.7M753.0 347.1V348.5M757.9 331.5V332.7M763.7 317.2V318.1M764.5 316.5V317.3M766.1 311.8V312.9M776.0 294.7V295.8M780.1 288.2V289.0M783.3 302.4V303.8M784.2 297.6V299.0M787.4 289.5V290.7M789.1 287.0V287.9M792.4 280.6V281.9M794.0 285.5V286.5M807.1 286.8V287.7M809.6 289.7V291.1M814.5 296.4V297.5M815.3 293.3V294.3M817.0 289.8V291.2M819.4 311.9V312.9M823.5 324.8V326.2M829.3 339.1V340.1M834.2 334.3V335.6M835.8 329.7V330.5M842.4 323.3V324.2M844.0 322.8V323.8M854.7 326.9V327.9M866.2 324.6V326.0M868.6 324.5V326.0M875.2 322.2V323.5M876.0 324.2V325.2M880.1 330.5V331.5M880.9 330.4V331.6M891.6 333.8V335.1M895.7 329.1V330.2M9.7 282.4V283.3M12.7 297.6V298.5M13.6 297.0V297.9M16.5 304.0V304.9M20.8 296.3V297.2M24.9 306.5V307.4M28.0 304.0V304.9M31.8 307.8V308.7M32.7 307.2V308.1M34.3 312.8V313.7M38.6 310.3V311.2M45.2 304.0V304.9M46.1 303.4V304.3M47.8 306.0V306.9M48.7 305.4V306.3M52.9 306.0V306.9M55.4 301.9V302.8M56.3 301.3V302.2M59.0 295.8V296.7M59.9 295.2V296.1M65.6 295.8V296.7M66.5 295.2V296.1M68.1 290.7V291.6M69.0 290.1V291.0M72.4 293.8V294.7M83.4 297.6V298.5M84.3 297.0V297.9M85.1 294.3V295.2M86.0 293.7V294.6M87.7 291.8V292.7M88.6 291.2V292.1M94.5 295.1V296.0M95.4 294.5V295.4M96.1 290.0V290.9M97.0 289.4V290.3M104.2 291.8V292.7M105.1 291.2V292.1M111.1 283.6V284.5M112.0 283.0V283.9M119.4 281.1V282.0M126.3 278.5V279.4M127.2 277.9V278.8M901.1 331.3V332.2M907.9 329.2V330.1M909.5 328.0V328.9M914.3 319.6V320.5M915.2 319.0V319.9M917.6 316.5V317.4M918.5 315.9V316.8M919.6 314.5V315.4M920.5 313.9V314.8M927.0 306.4V307.3M927.9 305.8V306.7M929.0 311.4V312.3M929.9 310.8V311.7M934.1 317.8V318.7M935.9 316.0V316.9M936.8 315.4V316.3M938.7 320.3V321.2M943.0 317.8V318.7M943.9 317.2V318.1M945.1 312.7V313.6M949.4 315.2V316.1M950.3 314.6V315.5M956.2 319.1V320.0M957.1 318.5V319.4M958.8 319.1V320.0M959.7 318.5V319.4M960.8 316.5V317.4M961.7 315.9V316.8M962.8 315.2V316.1M963.7 314.6V315.5M965.4 317.8V318.7M966.3 317.2V318.1M967.2 316.0V316.9M968.1 315.4V316.3M968.9 314.5V315.4M969.8 313.9V314.8" stroke="#dcd266" stroke-width="1.5" fill="none"/><path d="M132.3 255.6V258.8M134.7 262.6V266.2M135.5 264.7V269.2M138.0 270.4V272.7M142.1 264.8V268.2M155.2 280.8V285.4M158.5 276.6V282.1M160.1 279.9V283.0M170.0 272.1V275.2M170.8 268.5V274.1M171.6 264.7V270.9M187.2 253.8V257.6M192.1 252.2V254.7M200.3 250.3V251.4M213.4 238.6V242.4M214.3 241.7V247.7M215.1 245.5V251.8M215.9 248.6V250.4M220.8 236.8V239.2M221.6 237.5V239.8M223.3 240.3V244.6M229.0 254.5V256.4M229.8 255.9V258.8M236.4 257.4V262.5M238.0 266.7V274.1M240.5 280.1V286.3M241.3 284.7V289.9M249.5 282.9V285.5M256.9 279.3V283.6M257.7 280.9V285.8M268.4 264.9V269.3M273.3 262.4V264.9M274.1 261.3V263.9M276.6 259.1V261.5M298.7 252.7V255.9M299.5 255.2V259.4M302.0 262.2V264.9M302.8 263.9V265.6M312.7 260.3V263.6M315.1 262.2V266.6M320.0 272.7V274.2M330.7 264.6V266.8M331.5 264.6V266.9M339.7 266.8V271.8M347.9 269.4V271.1M349.6 273.7V278.1M351.2 278.1V280.9M359.4 284.1V286.8M365.1 280.0V282.5M372.5 282.4V284.9M386.5 276.5V277.9M401.2 271.5V276.9M402.0 275.5V278.8M406.1 282.5V284.8M411.1 270.2V272.1M411.9 272.1V272.9M412.7 268.4V274.2M425.8 254.7V256.1M426.6 254.5V256.6M432.4 240.8V248.5M434.8 231.6V237.5M441.4 213.1V219.1M442.2 214.5V218.1M444.7 223.1V226.0M445.5 224.2V229.9M446.3 227.6V234.8M448.8 232.2V233.2M450.4 235.0V238.6M457.8 238.1V243.3M458.6 241.8V248.7M459.4 244.4V252.4M473.4 227.0V237.8M474.2 233.4V236.2M475.0 232.3V235.2M481.6 232.0V235.0M482.4 232.9V238.0M484.0 239.0V245.5M485.7 245.3V247.9M486.5 244.7V248.0M489.0 246.1V247.1M490.6 247.9V253.4M492.2 252.4V256.5M493.9 255.1V258.1M497.2 253.1V255.8M498.0 253.1V256.5M504.5 254.1V266.2M507.0 271.9V278.2M511.9 278.0V285.9M518.5 300.3V307.4M523.4 293.4V296.1M538.2 263.4V266.0M546.4 264.6V266.9M548.8 270.1V276.4M556.2 275.0V278.7M593.9 271.0V275.6M600.5 264.9V267.4M620.2 259.7V261.9M636.6 248.3V250.8M655.4 237.1V239.9M657.1 238.6V241.2M660.3 246.3V249.5M673.5 240.6V241.8M694.0 257.3V261.3M703.8 252.5V254.4M704.6 253.0V255.5M706.3 262.0V273.1M707.1 267.7V276.9M709.5 279.7V285.1M712.0 281.1V286.4M712.8 287.6V320.6M719.4 296.7V301.0M720.2 298.8V303.9M721.0 301.3V307.8M722.7 304.6V313.3M723.5 307.9V311.8M727.6 303.5V307.8M728.4 304.4V308.1M730.0 309.2V315.2M730.9 309.3V317.2M734.1 311.7V319.1M735.0 314.3V321.3M738.2 325.8V334.6M739.1 330.2V342.1M739.9 336.7V349.2M741.5 341.1V350.6M743.2 329.8V340.7M744.8 337.6V351.5M748.9 346.6V351.3M751.4 344.7V348.7M753.8 344.9V348.0M758.7 323.1V330.2M769.4 302.4V304.7M776.8 295.5V299.0M786.6 288.7V292.1M811.2 290.6V293.9M826.8 334.9V339.2M856.3 329.7V331.8M10.9 288.8V292.1M60.5 296.5V298.1M98.3 285.2V287.0M124.5 274.3V276.0M906.2 330.1V333.3M929.8 314.8V316.6M932.1 319.7V321.8M946.8 312.3V314.0" stroke="#0b72de" stroke-width="1.0" fill="none"/><path d="M129.8 257.3V262.2M130.6 254.5V259.3M131.4 255.9V258.4M133.1 258.2V262.6M146.2 262.2V268.6M147.8 262.0V265.0M148.7 262.9V264.5M156.0 281.2V283.0M156.9 276.8V281.9M159.3 279.0V280.4M165.1 275.6V278.2M165.9 273.8V276.8M168.3 271.9V274.8M174.9 264.3V266.7M176.5 262.3V265.6M179.8 257.3V259.7M182.3 251.6V255.5M183.9 250.6V252.9M196.2 247.9V253.8M202.8 250.7V253.3M203.6 251.0V251.8M208.5 239.9V244.8M216.7 246.3V248.3M217.5 245.6V248.1M219.2 240.4V243.4M220.0 238.7V241.5M243.0 279.2V286.0M244.6 277.8V279.7M265.1 266.1V272.0M270.0 266.4V267.5M271.7 264.2V265.9M274.9 258.4V261.4M288.9 253.4V254.9M289.7 255.5V257.9M293.0 256.3V257.3M294.6 250.9V253.6M295.4 250.6V252.1M306.1 262.1V264.7M311.0 258.4V259.4M321.7 269.8V272.7M335.6 267.7V268.7M336.4 265.6V270.5M356.1 278.4V280.2M362.7 280.0V281.9M390.6 273.3V275.4M393.0 270.8V274.3M416.0 269.4V274.6M420.9 261.6V265.1M421.7 258.9V261.7M425.0 255.8V258.4M433.2 236.8V244.4M434.0 235.0V241.5M438.9 223.1V238.3M452.9 238.4V242.2M462.7 250.4V254.7M463.5 242.5V253.2M465.2 238.7V243.5M469.3 232.5V236.2M471.7 227.6V232.1M477.5 235.5V239.7M479.1 228.4V233.9M479.9 229.8V231.6M488.1 246.0V248.4M516.8 291.3V299.7M525.9 288.3V291.7M537.3 262.5V265.5M541.4 264.7V266.5M553.7 277.5V279.4M554.6 274.1V277.6M557.8 280.0V281.8M571.0 273.0V275.4M574.2 269.4V274.9M576.7 270.0V271.5M577.5 269.2V272.4M597.2 269.2V273.7M614.4 259.7V266.4M617.7 259.0V260.8M618.5 260.3V261.3M641.5 246.0V247.8M646.4 238.3V243.9M649.7 226.2V231.0M650.5 224.4V228.7M665.3 239.3V242.1M675.1 241.0V242.6M692.3 255.6V258.5M701.3 253.1V256.4M703.0 252.3V255.2M714.5 311.6V324.5M715.3 302.2V317.5M731.7 308.4V314.7M733.3 305.6V313.1M745.6 340.6V346.3M750.5 344.8V346.6M754.6 337.4V344.3M755.5 336.0V341.3M756.3 337.0V339.7M757.1 333.1V337.3M759.6 318.6V327.3M766.9 303.4V310.5M768.6 302.0V305.1M771.9 298.9V301.3M775.1 292.6V294.1M785.0 292.1V298.2M788.3 287.1V292.1M789.9 281.0V285.3M790.7 279.4V282.3M810.4 288.1V294.6M812.0 292.0V295.0M813.7 293.7V296.8M816.1 290.9V293.8M826.0 331.6V336.7M830.1 335.4V338.7M841.6 322.9V327.3M857.1 329.0V331.6M867.0 323.3V325.4M872.7 321.4V324.0M894.0 329.9V331.6M7.6 290.6V292.8M14.5 299.2V302.0M18.6 299.7V301.5M79.3 303.4V305.4M81.8 291.6V294.4M106.2 284.4V286.2M113.6 277.7V280.3M121.5 276.4V279.1M903.6 330.8V333.6" stroke="#ee0606" stroke-width="1.0" fill="none"/><path d="M6.4 493.6h1.55V499.1h-1.55zM7.2 497.6h1.55V501.4h-1.55zM8.0 499.9h1.55V502.3h-1.55zM8.9 500.8h1.55V511.5h-1.55zM9.7 506.9h1.55V514.1h-1.55zM10.5 500.8h1.55V508.4h-1.55zM11.3 499.4h1.55V502.3h-1.55zM12.1 496.1h1.55V506.7h-1.55zM13.0 504.2h1.55V506.7h-1.55zM13.8 504.2h1.55V506.8h-1.55zM14.6 504.7h1.55V506.8h-1.55zM15.4 504.7h1.55V510.7h-1.55zM16.2 508.0h1.55V512.9h-1.55zM17.1 508.9h1.55V512.9h-1.55zM17.9 508.9h1.55V513.3h-1.55zM18.7 509.5h1.55V513.3h-1.55zM19.5 507.0h1.55V511.0h-1.55zM20.3 507.0h1.55V510.9h-1.55zM21.2 504.1h1.55V508.5h-1.55zM22.0 502.2h1.55V505.6h-1.55zM22.8 502.2h1.55V506.6h-1.55zM23.6 502.8h1.55V506.6h-1.55zM24.4 491.7h1.55V504.3h-1.55zM25.3 482.7h1.55V493.2h-1.55zM26.1 477.2h1.55V484.2h-1.55zM26.9 479.6h1.55V481.3h-1.55zM27.7 479.6h1.55V483.2h-1.55zM28.5 478.8h1.55V485.2h-1.55zM29.4 483.7h1.55V493.3h-1.55zM30.2 491.8h1.55V503.5h-1.55zM31.0 499.8h1.55V502.9h-1.55zM31.8 497.0h1.55V501.6h-1.55zM32.6 496.6h1.55V510.3h-1.55zM33.5 508.8h1.55V514.0h-1.55zM34.3 512.5h1.55V518.3h-1.55zM35.1 516.8h1.55V524.4h-1.55zM35.9 520.6h1.55V523.7h-1.55zM36.7 521.5h1.55V526.7h-1.55zM37.6 521.5h1.55V525.7h-1.55zM38.4 522.3h1.55V525.7h-1.55zM39.2 522.3h1.55V527.3h-1.55zM40.0 523.2h1.55V527.3h-1.55zM40.8 518.5h1.55V524.7h-1.55zM41.7 514.7h1.55V524.3h-1.55zM42.5 511.5h1.55V516.2h-1.55zM43.3 507.6h1.55V515.4h-1.55zM44.1 507.6h1.55V513.5h-1.55zM44.9 507.3h1.55V514.9h-1.55zM45.8 508.1h1.55V514.9h-1.55zM46.6 508.1h1.55V509.9h-1.55zM47.4 508.0h1.55V511.7h-1.55zM48.2 508.0h1.55V511.4h-1.55zM49.0 508.0h1.55V512.1h-1.55zM49.9 507.5h1.55V514.1h-1.55zM50.7 503.9h1.55V509.0h-1.55zM51.5 503.5h1.55V505.4h-1.55zM52.3 501.3h1.55V505.0h-1.55zM53.1 502.4h1.55V504.9h-1.55zM54.0 502.4h1.55V506.2h-1.55zM54.8 499.8h1.55V506.2h-1.55zM55.6 498.4h1.55V503.3h-1.55zM56.4 493.2h1.55V499.9h-1.55zM57.2 489.9h1.55V495.2h-1.55zM58.1 493.7h1.55V498.8h-1.55zM58.9 491.6h1.55V496.7h-1.55zM59.7 492.1h1.55V496.9h-1.55zM60.5 490.0h1.55V495.0h-1.55zM61.3 490.0h1.55V494.7h-1.55zM62.2 486.0h1.55V496.2h-1.55zM63.0 481.0h1.55V487.5h-1.55zM63.8 478.6h1.55V484.3h-1.55zM64.6 476.0h1.55V484.8h-1.55zM65.4 476.0h1.55V480.8h-1.55zM66.3 477.3h1.55V480.8h-1.55zM67.1 477.3h1.55V484.6h-1.55zM67.9 483.1h1.55V489.8h-1.55zM68.7 488.3h1.55V496.1h-1.55zM69.5 493.2h1.55V502.1h-1.55zM70.4 500.6h1.55V504.9h-1.55zM71.2 501.8h1.55V506.1h-1.55zM72.0 504.6h1.55V506.6h-1.55zM72.8 503.0h1.55V506.6h-1.55zM73.6 500.3h1.55V504.5h-1.55zM74.5 500.3h1.55V506.4h-1.55zM75.3 501.3h1.55V503.1h-1.55zM76.1 498.9h1.55V502.8h-1.55zM76.9 497.6h1.55V500.4h-1.55zM77.7 492.9h1.55V501.0h-1.55zM78.6 489.2h1.55V494.4h-1.55zM79.4 486.5h1.55V490.7h-1.55zM80.2 486.5h1.55V490.5h-1.55zM81.0 484.3h1.55V490.5h-1.55zM81.8 485.6h1.55V489.6h-1.55zM82.7 487.6h1.55V489.6h-1.55zM83.5 484.7h1.55V489.1h-1.55zM84.3 481.0h1.55V488.9h-1.55zM85.1 480.1h1.55V482.5h-1.55zM85.9 473.7h1.55V481.6h-1.55zM86.8 472.9h1.55V476.7h-1.55zM87.6 474.1h1.55V477.5h-1.55zM88.4 476.0h1.55V480.6h-1.55zM89.2 477.7h1.55V480.6h-1.55zM90.0 477.7h1.55V480.5h-1.55zM90.9 477.8h1.55V480.5h-1.55zM91.7 475.5h1.55V479.5h-1.55zM92.5 474.4h1.55V479.5h-1.55zM93.3 475.5h1.55V477.8h-1.55zM94.1 472.1h1.55V477.0h-1.55zM95.0 468.0h1.55V473.6h-1.55zM95.8 464.2h1.55V472.0h-1.55zM96.6 458.8h1.55V465.7h-1.55zM97.4 458.0h1.55V460.3h-1.55zM98.2 458.0h1.55V460.4h-1.55zM99.1 458.9h1.55V461.5h-1.55zM99.9 460.0h1.55V462.3h-1.55zM100.7 458.5h1.55V465.2h-1.55zM101.5 458.5h1.55V460.6h-1.55zM102.3 456.9h1.55V463.1h-1.55zM103.2 455.4h1.55V458.4h-1.55zM104.0 452.8h1.55V460.3h-1.55zM104.8 449.6h1.55V454.3h-1.55zM105.6 449.0h1.55V451.1h-1.55zM106.4 448.7h1.55V450.5h-1.55zM107.3 448.2h1.55V452.7h-1.55zM108.1 448.2h1.55V450.1h-1.55zM108.9 448.6h1.55V453.0h-1.55zM109.7 451.5h1.55V453.0h-1.55zM110.5 451.5h1.55V455.3h-1.55zM111.4 452.1h1.55V455.6h-1.55zM112.2 453.1h1.55V455.6h-1.55zM113.0 451.4h1.55V456.3h-1.55zM113.8 454.8h1.55V457.6h-1.55zM114.6 450.7h1.55V456.3h-1.55zM115.5 450.7h1.55V453.2h-1.55zM116.3 450.4h1.55V453.2h-1.55zM117.1 448.9h1.55V451.9h-1.55zM117.9 442.9h1.55V450.4h-1.55zM118.7 442.9h1.55V447.4h-1.55zM119.6 442.7h1.55V449.3h-1.55zM120.4 442.7h1.55V447.1h-1.55zM121.2 441.5h1.55V447.1h-1.55zM122.0 440.5h1.55V443.0h-1.55zM122.8 440.5h1.55V443.5h-1.55zM123.7 442.0h1.55V445.4h-1.55zM124.5 441.9h1.55V445.4h-1.55zM125.3 443.0h1.55V444.7h-1.55zM126.1 443.0h1.55V445.1h-1.55zM126.9 441.6h1.55V446.0h-1.55zM127.8 443.6h1.55V446.0h-1.55zM128.6 433.5h1.55V445.1h-1.55zM129.4 434.0h1.55V437.4h-1.55zM130.2 434.0h1.55V439.3h-1.55zM131.0 437.3h1.55V441.0h-1.55zM131.9 435.9h1.55V439.0h-1.55zM132.7 436.8h1.55V439.0h-1.55zM133.5 436.8h1.55V438.9h-1.55zM134.3 429.1h1.55V438.9h-1.55zM135.1 429.1h1.55V432.3h-1.55zM136.0 426.9h1.55V432.3h-1.55zM136.8 429.4h1.55V434.9h-1.55zM137.6 427.7h1.55V439.7h-1.55zM138.4 438.2h1.55V441.7h-1.55zM139.2 440.2h1.55V444.8h-1.55zM140.1 443.3h1.55V446.5h-1.55zM140.9 445.0h1.55V447.4h-1.55zM141.7 445.9h1.55V449.4h-1.55zM142.5 445.3h1.55V449.4h-1.55zM143.3 444.0h1.55V446.8h-1.55zM144.2 442.0h1.55V445.5h-1.55zM145.0 437.5h1.55V443.5h-1.55zM145.8 432.6h1.55V442.0h-1.55zM146.6 428.4h1.55V437.3h-1.55zM147.4 427.6h1.55V432.9h-1.55zM148.3 420.8h1.55V429.1h-1.55zM149.1 422.9h1.55V427.0h-1.55zM149.9 423.8h1.55V427.0h-1.55zM150.7 422.0h1.55V425.3h-1.55zM151.5 421.0h1.55V425.3h-1.55zM152.4 421.0h1.55V426.2h-1.55zM153.2 422.9h1.55V427.8h-1.55zM154.0 426.3h1.55V430.0h-1.55zM154.8 427.2h1.55V430.0h-1.55zM155.6 426.3h1.55V431.8h-1.55zM156.5 426.3h1.55V428.6h-1.55zM157.3 426.3h1.55V428.6h-1.55zM158.1 423.9h1.55V427.8h-1.55zM158.9 422.9h1.55V425.4h-1.55zM159.7 422.9h1.55V428.0h-1.55zM160.6 419.6h1.55V424.7h-1.55zM161.4 419.3h1.55V424.2h-1.55zM162.2 421.4h1.55V423.6h-1.55zM163.0 421.4h1.55V423.8h-1.55zM163.8 422.3h1.55V426.2h-1.55zM164.7 424.7h1.55V431.3h-1.55zM165.5 429.5h1.55V431.3h-1.55zM166.3 426.6h1.55V431.0h-1.55zM167.1 426.6h1.55V431.1h-1.55zM167.9 427.0h1.55V429.9h-1.55zM168.8 428.4h1.55V430.7h-1.55zM169.6 422.4h1.55V430.7h-1.55zM170.4 423.9h1.55V427.0h-1.55zM171.2 421.1h1.55V428.7h-1.55zM172.0 421.9h1.55V428.7h-1.55zM172.9 420.9h1.55V423.4h-1.55zM173.7 420.9h1.55V425.7h-1.55zM174.5 424.2h1.55V432.5h-1.55zM175.3 429.7h1.55V440.0h-1.55zM176.1 433.0h1.55V440.0h-1.55zM177.0 433.0h1.55V437.5h-1.55zM177.8 429.5h1.55V437.5h-1.55zM178.6 429.5h1.55V432.9h-1.55zM179.4 431.4h1.55V435.5h-1.55zM180.2 430.7h1.55V435.5h-1.55zM181.1 429.5h1.55V432.2h-1.55zM181.9 429.1h1.55V432.3h-1.55zM182.7 422.2h1.55V430.6h-1.55zM183.5 423.8h1.55V426.1h-1.55zM184.3 423.7h1.55V425.3h-1.55zM185.2 423.7h1.55V426.3h-1.55zM186.0 422.2h1.55V426.4h-1.55zM186.8 422.0h1.55V427.0h-1.55zM187.6 423.4h1.55V429.7h-1.55zM188.4 428.1h1.55V429.7h-1.55zM189.3 428.1h1.55V432.1h-1.55zM190.1 422.8h1.55V432.1h-1.55zM190.9 420.6h1.55V424.3h-1.55zM191.7 419.5h1.55V422.1h-1.55zM192.5 415.5h1.55V421.0h-1.55zM193.4 418.5h1.55V422.2h-1.55zM194.2 419.4h1.55V422.2h-1.55zM195.0 419.4h1.55V421.3h-1.55zM195.8 419.8h1.55V426.0h-1.55zM196.6 421.2h1.55V426.5h-1.55zM197.5 421.2h1.55V429.4h-1.55zM198.3 424.9h1.55V431.8h-1.55zM199.1 430.3h1.55V437.5h-1.55zM199.9 435.4h1.55V437.5h-1.55zM200.7 433.7h1.55V436.9h-1.55zM201.6 430.9h1.55V435.2h-1.55zM202.4 430.9h1.55V440.3h-1.55zM203.2 435.2h1.55V440.3h-1.55zM204.0 437.1h1.55V441.4h-1.55zM204.8 438.5h1.55V444.6h-1.55zM205.7 438.5h1.55V442.6h-1.55zM206.5 438.6h1.55V444.7h-1.55zM207.3 433.2h1.55V443.3h-1.55zM208.1 429.4h1.55V434.7h-1.55zM208.9 430.8h1.55V434.2h-1.55zM209.8 430.3h1.55V432.3h-1.55zM210.6 430.3h1.55V436.9h-1.55zM211.4 433.1h1.55V441.0h-1.55zM212.2 439.5h1.55V441.0h-1.55zM213.0 431.1h1.55V441.0h-1.55zM213.9 433.9h1.55V439.5h-1.55zM214.7 431.8h1.55V440.2h-1.55zM215.5 438.7h1.55V444.0h-1.55zM216.3 442.5h1.55V445.0h-1.55zM217.1 439.6h1.55V445.0h-1.55zM218.0 438.7h1.55V441.1h-1.55zM218.8 435.1h1.55V440.2h-1.55zM219.6 434.2h1.55V436.6h-1.55zM220.4 434.2h1.55V439.9h-1.55zM221.2 435.7h1.55V439.9h-1.55zM222.1 435.6h1.55V437.2h-1.55zM222.9 435.6h1.55V441.7h-1.55zM223.7 437.9h1.55V441.0h-1.55zM224.5 437.8h1.55V443.7h-1.55zM225.3 440.2h1.55V443.7h-1.55zM226.2 431.2h1.55V441.7h-1.55zM227.0 431.5h1.55V435.1h-1.55zM227.8 430.0h1.55V434.3h-1.55zM228.6 430.0h1.55V436.4h-1.55zM229.4 433.0h1.55V436.4h-1.55zM230.3 433.0h1.55V435.2h-1.55zM231.1 433.7h1.55V436.1h-1.55zM231.9 432.8h1.55V436.1h-1.55zM232.7 434.0h1.55V436.3h-1.55zM233.5 433.7h1.55V436.3h-1.55zM234.4 431.6h1.55V436.8h-1.55zM235.2 435.3h1.55V440.3h-1.55zM236.0 435.7h1.55V440.3h-1.55zM236.8 435.7h1.55V437.3h-1.55zM237.6 433.8h1.55V437.3h-1.55zM238.5 433.8h1.55V437.8h-1.55zM239.3 434.8h1.55V439.7h-1.55zM240.1 436.9h1.55V439.7h-1.55zM240.9 434.8h1.55V440.9h-1.55zM241.7 439.3h1.55V440.9h-1.55zM242.6 438.5h1.55V440.8h-1.55zM243.4 435.5h1.55V440.0h-1.55zM244.2 437.2h1.55V438.7h-1.55zM245.0 437.2h1.55V438.9h-1.55zM245.8 437.4h1.55V440.8h-1.55zM246.7 439.3h1.55V443.3h-1.55zM247.5 437.7h1.55V443.3h-1.55zM248.3 434.9h1.55V439.2h-1.55zM249.1 436.8h1.55V439.8h-1.55zM249.9 438.1h1.55V439.8h-1.55zM250.8 438.1h1.55V441.7h-1.55zM251.6 440.2h1.55V446.6h-1.55zM252.4 443.6h1.55V449.3h-1.55zM253.2 447.8h1.55V452.3h-1.55zM254.0 450.8h1.55V461.1h-1.55zM254.9 456.5h1.55V463.8h-1.55zM255.7 456.8h1.55V463.8h-1.55zM256.5 455.4h1.55V458.3h-1.55zM257.3 454.8h1.55V456.9h-1.55zM258.1 454.8h1.55V456.4h-1.55zM259.0 453.9h1.55V456.4h-1.55zM259.8 453.9h1.55V457.3h-1.55zM260.6 454.5h1.55V457.3h-1.55zM261.4 454.5h1.55V462.1h-1.55zM262.2 460.6h1.55V464.4h-1.55zM263.1 462.9h1.55V464.9h-1.55zM263.9 458.1h1.55V464.9h-1.55zM264.7 452.5h1.55V459.6h-1.55zM265.5 452.5h1.55V454.0h-1.55zM266.3 449.7h1.55V454.9h-1.55zM267.2 453.4h1.55V457.1h-1.55zM268.0 455.6h1.55V463.6h-1.55zM268.8 459.4h1.55V463.6h-1.55zM269.6 459.4h1.55V461.2h-1.55zM270.4 459.7h1.55V463.2h-1.55zM271.3 457.1h1.55V463.2h-1.55zM272.1 453.5h1.55V458.6h-1.55zM272.9 452.0h1.55V455.0h-1.55zM273.7 450.0h1.55V453.5h-1.55zM274.5 446.6h1.55V451.5h-1.55zM275.4 446.6h1.55V448.8h-1.55zM276.2 444.5h1.55V452.9h-1.55zM277.0 448.4h1.55V454.6h-1.55zM277.8 452.5h1.55V454.6h-1.55zM278.6 452.5h1.55V456.0h-1.55zM279.5 450.4h1.55V456.0h-1.55zM280.3 450.4h1.55V451.9h-1.55zM281.1 447.8h1.55V451.9h-1.55zM281.9 443.0h1.55V449.3h-1.55zM282.7 443.2h1.55V447.3h-1.55zM283.6 442.1h1.55V448.5h-1.55zM284.4 442.1h1.55V446.3h-1.55zM285.2 439.4h1.55V446.3h-1.55zM286.0 439.4h1.55V445.5h-1.55zM286.8 444.0h1.55V450.5h-1.55zM287.7 449.0h1.55V452.9h-1.55zM288.5 451.4h1.55V456.0h-1.55zM289.3 451.3h1.55V453.7h-1.55zM290.1 451.3h1.55V453.8h-1.55zM290.9 451.6h1.55V453.8h-1.55zM291.8 451.6h1.55V455.5h-1.55zM292.6 451.2h1.55V455.5h-1.55zM293.4 451.2h1.55V456.6h-1.55zM294.2 452.4h1.55V457.9h-1.55zM295.0 451.5h1.55V453.9h-1.55zM295.9 450.9h1.55V453.0h-1.55zM296.7 449.2h1.55V452.4h-1.55zM297.5 446.8h1.55V457.0h-1.55zM298.3 454.7h1.55V457.0h-1.55zM299.1 454.7h1.55V457.9h-1.55zM300.0 450.4h1.55V456.5h-1.55zM300.8 452.3h1.55V453.9h-1.55zM301.6 450.9h1.55V456.4h-1.55zM302.4 450.9h1.55V457.2h-1.55zM303.2 451.9h1.55V454.3h-1.55zM304.1 451.9h1.55V454.1h-1.55zM304.9 452.6h1.55V454.5h-1.55zM305.7 451.4h1.55V456.4h-1.55zM306.5 451.4h1.55V457.6h-1.55zM307.3 456.1h1.55V462.6h-1.55zM308.2 456.1h1.55V461.0h-1.55zM309.0 456.5h1.55V460.4h-1.55zM309.8 456.5h1.55V459.7h-1.55zM310.6 458.2h1.55V462.7h-1.55zM311.4 459.7h1.55V464.2h-1.55zM312.3 462.7h1.55V466.2h-1.55zM313.1 464.7h1.55V466.7h-1.55zM313.9 465.2h1.55V470.3h-1.55zM314.7 468.8h1.55V476.1h-1.55zM315.5 472.2h1.55V476.1h-1.55zM316.4 466.8h1.55V473.7h-1.55zM317.2 469.3h1.55V471.3h-1.55zM318.0 465.8h1.55V471.3h-1.55zM318.8 465.3h1.55V467.3h-1.55zM319.6 462.8h1.55V469.6h-1.55zM320.5 466.4h1.55V469.6h-1.55zM321.3 466.4h1.55V470.0h-1.55zM322.1 468.5h1.55V472.1h-1.55zM322.9 467.1h1.55V471.6h-1.55zM323.7 464.4h1.55V468.6h-1.55zM324.6 462.3h1.55V465.9h-1.55zM325.4 460.4h1.55V466.1h-1.55zM326.2 460.4h1.55V466.1h-1.55zM327.0 463.4h1.55V469.6h-1.55zM327.8 466.6h1.55V472.4h-1.55zM328.7 468.3h1.55V472.4h-1.55zM329.5 468.3h1.55V476.1h-1.55zM330.3 474.6h1.55V481.0h-1.55zM331.1 473.9h1.55V477.9h-1.55zM331.9 473.9h1.55V476.7h-1.55zM332.8 472.7h1.55V477.9h-1.55zM333.6 472.7h1.55V475.7h-1.55zM334.4 471.7h1.55V479.6h-1.55zM335.2 478.1h1.55V482.2h-1.55zM336.0 480.7h1.55V484.7h-1.55zM336.9 483.0h1.55V484.7h-1.55zM337.7 479.9h1.55V484.5h-1.55zM338.5 479.9h1.55V483.1h-1.55zM339.3 473.3h1.55V483.1h-1.55zM340.1 472.8h1.55V474.8h-1.55zM341.0 469.6h1.55V474.3h-1.55zM341.8 469.6h1.55V472.4h-1.55zM342.6 470.9h1.55V474.9h-1.55zM343.4 473.4h1.55V475.8h-1.55zM344.2 470.1h1.55V475.8h-1.55zM345.1 465.9h1.55V474.0h-1.55zM345.9 465.9h1.55V468.7h-1.55zM346.7 467.2h1.55V472.3h-1.55zM347.5 470.8h1.55V474.8h-1.55zM348.3 471.1h1.55V476.2h-1.55zM349.2 470.4h1.55V476.2h-1.55zM350.0 472.0h1.55V473.5h-1.55zM350.8 472.0h1.55V476.2h-1.55zM351.6 473.6h1.55V477.6h-1.55zM352.4 473.6h1.55V479.3h-1.55zM353.3 477.8h1.55V482.6h-1.55zM354.1 481.1h1.55V483.1h-1.55zM354.9 481.6h1.55V484.3h-1.55zM355.7 482.8h1.55V487.3h-1.55zM356.5 485.8h1.55V490.3h-1.55zM357.4 483.7h1.55V490.3h-1.55zM358.2 479.5h1.55V485.2h-1.55zM359.0 476.8h1.55V481.0h-1.55zM359.8 474.3h1.55V478.3h-1.55zM360.6 474.3h1.55V478.3h-1.55zM361.5 476.8h1.55V479.0h-1.55zM362.3 474.8h1.55V482.4h-1.55zM363.1 476.6h1.55V482.4h-1.55zM363.9 475.4h1.55V478.1h-1.55zM364.7 475.0h1.55V476.9h-1.55zM365.6 472.6h1.55V480.9h-1.55zM366.4 478.6h1.55V480.9h-1.55zM367.2 478.6h1.55V481.7h-1.55zM368.0 480.2h1.55V484.2h-1.55zM368.8 482.7h1.55V485.6h-1.55zM369.7 484.1h1.55V488.4h-1.55zM370.5 482.1h1.55V488.4h-1.55zM371.3 482.1h1.55V484.2h-1.55zM372.1 482.7h1.55V487.2h-1.55zM372.9 485.7h1.55V487.9h-1.55zM373.8 486.4h1.55V489.8h-1.55zM374.6 488.3h1.55V491.2h-1.55zM375.4 488.1h1.55V491.2h-1.55zM376.2 484.3h1.55V489.6h-1.55zM377.0 483.1h1.55V485.8h-1.55zM377.9 481.8h1.55V484.6h-1.55zM378.7 481.8h1.55V484.7h-1.55zM379.5 481.5h1.55V484.7h-1.55zM380.3 481.5h1.55V483.4h-1.55zM381.1 481.9h1.55V484.3h-1.55zM382.0 480.3h1.55V488.6h-1.55zM382.8 487.1h1.55V494.4h-1.55zM383.6 488.8h1.55V494.4h-1.55zM384.4 484.0h1.55V490.3h-1.55zM385.2 481.3h1.55V485.5h-1.55zM386.1 481.3h1.55V483.6h-1.55zM386.9 482.1h1.55V484.5h-1.55zM387.7 483.0h1.55V487.4h-1.55zM388.5 483.8h1.55V487.4h-1.55zM389.3 483.8h1.55V486.3h-1.55zM390.2 482.0h1.55V488.1h-1.55zM391.0 486.6h1.55V488.9h-1.55zM391.8 484.8h1.55V488.9h-1.55zM392.6 483.6h1.55V487.7h-1.55zM393.4 480.9h1.55V485.1h-1.55zM394.3 478.4h1.55V483.5h-1.55zM395.1 476.4h1.55V483.5h-1.55zM395.9 476.4h1.55V483.2h-1.55zM396.7 480.1h1.55V485.7h-1.55zM397.5 480.3h1.55V486.8h-1.55zM398.4 483.5h1.55V486.8h-1.55zM399.2 483.3h1.55V485.0h-1.55zM400.0 481.7h1.55V484.8h-1.55zM400.8 479.6h1.55V484.8h-1.55zM401.6 475.7h1.55V481.1h-1.55zM402.5 475.3h1.55V478.6h-1.55zM403.3 475.3h1.55V478.8h-1.55zM404.1 477.3h1.55V488.6h-1.55zM404.9 482.5h1.55V492.0h-1.55zM405.7 480.3h1.55V484.0h-1.55zM406.6 479.1h1.55V481.8h-1.55zM407.4 477.9h1.55V480.6h-1.55zM408.2 477.9h1.55V481.3h-1.55zM409.0 479.8h1.55V484.0h-1.55zM409.8 482.5h1.55V489.1h-1.55zM410.7 483.1h1.55V487.0h-1.55zM411.5 483.1h1.55V485.2h-1.55zM412.3 478.0h1.55V485.2h-1.55zM413.1 478.0h1.55V482.2h-1.55zM413.9 474.7h1.55V479.5h-1.55zM414.8 475.6h1.55V479.3h-1.55zM415.6 474.8h1.55V477.1h-1.55zM416.4 472.6h1.55V478.9h-1.55zM417.2 470.6h1.55V474.1h-1.55zM418.0 470.3h1.55V472.1h-1.55zM418.9 470.3h1.55V472.3h-1.55zM419.7 470.8h1.55V475.7h-1.55zM420.5 470.7h1.55V475.7h-1.55zM421.3 470.7h1.55V475.4h-1.55zM422.1 471.2h1.55V475.4h-1.55zM423.0 472.4h1.55V476.4h-1.55zM423.8 474.9h1.55V478.6h-1.55zM424.6 476.0h1.55V478.6h-1.55zM425.4 474.1h1.55V477.5h-1.55zM426.2 471.7h1.55V475.6h-1.55zM427.1 471.7h1.55V473.6h-1.55zM427.9 472.1h1.55V474.4h-1.55zM428.7 472.9h1.55V476.7h-1.55zM429.5 475.1h1.55V476.7h-1.55zM430.3 473.3h1.55V479.1h-1.55zM431.2 470.5h1.55V474.8h-1.55zM432.0 464.4h1.55V472.0h-1.55zM432.8 435.5h1.55V471.7h-1.55zM433.6 435.5h1.55V437.4h-1.55zM434.4 433.9h1.55V437.4h-1.55zM435.3 435.4h1.55V437.4h-1.55zM436.1 433.5h1.55V437.4h-1.55zM436.9 429.1h1.55V436.9h-1.55zM437.7 425.9h1.55V430.6h-1.55zM438.5 425.8h1.55V430.6h-1.55zM439.4 429.1h1.55V432.0h-1.55zM440.2 430.5h1.55V435.8h-1.55zM441.0 432.0h1.55V444.7h-1.55zM441.8 441.4h1.55V449.1h-1.55zM442.6 443.7h1.55V449.1h-1.55zM443.5 441.2h1.55V445.2h-1.55zM444.3 441.2h1.55V445.6h-1.55zM445.1 444.1h1.55V447.4h-1.55zM445.9 438.0h1.55V447.4h-1.55zM446.7 435.4h1.55V439.5h-1.55zM447.6 434.0h1.55V438.5h-1.55zM448.4 437.0h1.55V440.2h-1.55zM449.2 438.7h1.55V447.9h-1.55zM450.0 439.8h1.55V446.2h-1.55zM450.8 439.8h1.55V441.3h-1.55zM451.7 439.8h1.55V443.6h-1.55zM452.5 442.1h1.55V446.6h-1.55zM453.3 445.1h1.55V451.6h-1.55zM454.1 447.2h1.55V451.6h-1.55zM454.9 447.1h1.55V448.7h-1.55zM455.8 439.4h1.55V448.6h-1.55zM456.6 440.8h1.55V445.6h-1.55zM457.4 440.7h1.55V442.3h-1.55zM458.2 439.2h1.55V443.0h-1.55zM459.0 438.2h1.55V443.0h-1.55zM459.9 438.2h1.55V439.8h-1.55zM460.7 437.4h1.55V439.8h-1.55zM461.5 437.4h1.55V440.1h-1.55zM462.3 438.6h1.55V440.3h-1.55zM463.1 438.8h1.55V450.3h-1.55zM464.0 446.5h1.55V453.1h-1.55zM464.8 451.6h1.55V454.8h-1.55zM465.6 453.3h1.55V460.3h-1.55zM466.4 457.3h1.55V459.5h-1.55zM467.2 458.0h1.55V462.7h-1.55zM468.1 461.2h1.55V464.3h-1.55zM468.9 459.4h1.55V464.7h-1.55zM469.7 463.2h1.55V465.7h-1.55zM470.5 464.2h1.55V467.3h-1.55zM471.3 460.0h1.55V467.3h-1.55zM472.2 455.1h1.55V466.1h-1.55zM473.0 450.2h1.55V456.6h-1.55zM473.8 451.8h1.55V455.1h-1.55zM474.6 448.1h1.55V453.3h-1.55zM475.4 444.5h1.55V452.2h-1.55zM476.3 439.6h1.55V446.0h-1.55zM477.1 437.3h1.55V441.1h-1.55zM477.9 437.3h1.55V439.9h-1.55zM478.7 438.4h1.55V443.0h-1.55zM479.5 441.5h1.55V446.7h-1.55zM480.4 445.2h1.55V447.4h-1.55zM481.2 442.4h1.55V447.4h-1.55zM482.0 445.3h1.55V451.6h-1.55zM482.8 448.8h1.55V451.8h-1.55zM483.6 450.3h1.55V456.4h-1.55zM484.5 454.9h1.55V462.0h-1.55zM485.3 457.8h1.55V462.0h-1.55zM486.1 456.5h1.55V459.3h-1.55zM486.9 456.5h1.55V458.4h-1.55zM487.7 456.7h1.55V458.4h-1.55zM488.6 455.2h1.55V458.2h-1.55zM489.4 453.8h1.55V457.7h-1.55zM490.2 442.6h1.55V457.7h-1.55zM491.0 440.9h1.55V444.1h-1.55zM491.8 440.0h1.55V442.4h-1.55zM492.7 439.2h1.55V444.2h-1.55zM493.5 439.2h1.55V446.5h-1.55zM494.3 442.5h1.55V446.1h-1.55zM495.1 444.6h1.55V446.4h-1.55zM495.9 444.9h1.55V447.7h-1.55zM496.8 443.3h1.55V448.6h-1.55zM497.6 447.1h1.55V450.7h-1.55zM498.4 449.2h1.55V452.5h-1.55zM499.2 449.0h1.55V452.9h-1.55zM500.0 451.4h1.55V455.0h-1.55zM500.9 447.5h1.55V455.0h-1.55zM501.7 445.9h1.55V451.9h-1.55zM502.5 444.4h1.55V447.4h-1.55zM503.3 444.4h1.55V446.6h-1.55zM504.1 441.3h1.55V446.6h-1.55zM505.0 441.2h1.55V448.7h-1.55zM505.8 447.2h1.55V450.1h-1.55zM506.6 448.6h1.55V452.4h-1.55zM507.4 450.9h1.55V455.9h-1.55zM508.2 454.4h1.55V460.3h-1.55zM509.1 458.8h1.55V463.4h-1.55zM509.9 457.1h1.55V461.6h-1.55zM510.7 456.8h1.55V460.2h-1.55zM511.5 455.7h1.55V458.3h-1.55zM512.3 450.1h1.55V457.2h-1.55zM513.2 452.8h1.55V456.9h-1.55zM514.0 449.9h1.55V459.7h-1.55zM514.8 449.9h1.55V456.0h-1.55zM515.6 454.1h1.55V456.0h-1.55zM516.4 454.1h1.55V458.6h-1.55zM517.3 448.5h1.55V458.6h-1.55zM518.1 442.6h1.55V450.0h-1.55zM518.9 444.8h1.55V446.8h-1.55zM519.7 444.6h1.55V446.8h-1.55zM520.5 444.6h1.55V454.7h-1.55zM521.4 448.8h1.55V456.1h-1.55zM522.2 452.0h1.55V456.1h-1.55zM523.0 447.8h1.55V453.5h-1.55zM523.8 447.6h1.55V449.3h-1.55zM524.6 443.7h1.55V449.1h-1.55zM525.5 443.7h1.55V449.2h-1.55zM526.3 440.5h1.55V448.6h-1.55zM527.1 440.5h1.55V444.5h-1.55zM527.9 441.1h1.55V447.9h-1.55zM528.7 446.0h1.55V447.9h-1.55zM529.6 445.3h1.55V450.8h-1.55zM530.4 445.3h1.55V449.2h-1.55zM531.2 443.5h1.55V449.2h-1.55zM532.0 443.1h1.55V449.0h-1.55zM532.8 447.5h1.55V451.4h-1.55zM533.7 449.9h1.55V454.8h-1.55zM534.5 453.3h1.55V455.9h-1.55zM535.3 454.4h1.55V461.4h-1.55zM536.1 459.9h1.55V464.7h-1.55zM536.9 459.6h1.55V464.7h-1.55zM537.8 454.9h1.55V461.1h-1.55zM538.6 454.9h1.55V460.2h-1.55zM539.4 458.7h1.55V461.3h-1.55zM540.2 459.8h1.55V467.7h-1.55zM541.0 466.0h1.55V467.7h-1.55zM541.9 463.4h1.55V467.5h-1.55zM542.7 464.6h1.55V467.3h-1.55zM543.5 464.6h1.55V467.2h-1.55zM544.3 463.7h1.55V467.2h-1.55zM545.1 458.4h1.55V465.2h-1.55zM546.0 454.1h1.55V463.2h-1.55zM546.8 453.9h1.55V457.4h-1.55zM547.6 446.0h1.55V455.4h-1.55zM548.4 447.9h1.55V450.1h-1.55zM549.2 447.1h1.55V452.4h-1.55zM550.1 444.5h1.55V448.6h-1.55zM550.9 441.6h1.55V446.0h-1.55zM551.7 440.5h1.55V445.6h-1.55zM552.5 433.9h1.55V442.0h-1.55zM553.3 433.9h1.55V438.0h-1.55zM554.2 436.5h1.55V441.9h-1.55zM555.0 440.4h1.55V445.3h-1.55zM555.8 443.8h1.55V448.1h-1.55zM556.6 443.0h1.55V448.1h-1.55zM557.4 439.5h1.55V444.5h-1.55zM558.3 439.5h1.55V441.5h-1.55zM559.1 436.6h1.55V443.6h-1.55zM559.9 442.1h1.55V445.1h-1.55zM560.7 439.1h1.55V445.1h-1.55zM561.5 438.1h1.55V443.7h-1.55zM562.4 441.3h1.55V443.7h-1.55zM563.2 439.9h1.55V444.1h-1.55zM564.0 433.8h1.55V441.4h-1.55zM564.8 428.3h1.55V435.3h-1.55zM565.6 422.3h1.55V429.8h-1.55zM566.5 421.3h1.55V426.5h-1.55zM567.3 415.2h1.55V425.0h-1.55zM568.1 415.0h1.55V416.7h-1.55zM568.9 415.0h1.55V421.1h-1.55zM569.7 419.6h1.55V431.8h-1.55zM570.6 430.3h1.55V432.0h-1.55zM571.4 430.5h1.55V435.4h-1.55zM572.2 429.3h1.55V434.9h-1.55zM573.0 431.5h1.55V434.9h-1.55zM573.8 430.6h1.55V433.0h-1.55zM574.7 430.6h1.55V432.4h-1.55zM575.5 430.9h1.55V435.5h-1.55zM576.3 434.0h1.55V440.4h-1.55zM577.1 435.9h1.55V439.2h-1.55zM577.9 437.7h1.55V441.6h-1.55zM578.8 440.1h1.55V445.3h-1.55zM579.6 443.8h1.55V447.8h-1.55zM580.4 446.3h1.55V450.7h-1.55zM581.2 446.1h1.55V448.5h-1.55zM582.0 446.1h1.55V451.5h-1.55zM582.9 445.4h1.55V451.5h-1.55zM583.7 450.0h1.55V453.0h-1.55zM584.5 451.5h1.55V456.5h-1.55zM585.3 455.0h1.55V456.7h-1.55zM586.1 451.5h1.55V456.7h-1.55zM587.0 450.9h1.55V454.8h-1.55zM587.8 445.6h1.55V452.4h-1.55zM588.6 448.0h1.55V453.0h-1.55zM589.4 448.9h1.55V456.1h-1.55zM590.2 452.0h1.55V456.1h-1.55zM591.1 449.6h1.55V455.1h-1.55zM591.9 452.9h1.55V455.1h-1.55zM592.7 452.9h1.55V458.9h-1.55zM593.5 454.6h1.55V461.4h-1.55zM594.3 459.9h1.55V467.2h-1.55zM595.2 463.6h1.55V467.2h-1.55zM596.0 461.6h1.55V470.6h-1.55zM596.8 469.1h1.55V472.5h-1.55zM597.6 469.2h1.55V472.5h-1.55zM598.4 460.5h1.55V470.7h-1.55zM599.3 453.9h1.55V462.0h-1.55zM600.1 453.9h1.55V456.0h-1.55zM600.9 453.5h1.55V456.0h-1.55zM601.7 453.5h1.55V459.4h-1.55zM602.5 457.9h1.55V462.0h-1.55zM603.4 456.9h1.55V462.0h-1.55zM604.2 457.6h1.55V460.1h-1.55zM605.0 452.7h1.55V459.1h-1.55zM605.8 449.8h1.55V454.2h-1.55zM606.6 450.4h1.55V453.1h-1.55zM607.5 450.4h1.55V452.8h-1.55zM608.3 451.3h1.55V456.4h-1.55zM609.1 452.0h1.55V455.9h-1.55zM609.9 450.9h1.55V455.9h-1.55zM610.7 450.9h1.55V455.9h-1.55zM611.6 454.3h1.55V455.9h-1.55zM612.4 452.3h1.55V458.2h-1.55zM613.2 456.7h1.55V462.6h-1.55zM614.0 461.1h1.55V463.8h-1.55zM614.8 462.3h1.55V468.6h-1.55zM615.7 467.1h1.55V472.7h-1.55zM616.5 471.2h1.55V476.9h-1.55zM617.3 475.4h1.55V479.0h-1.55zM618.1 474.6h1.55V481.5h-1.55zM618.9 480.0h1.55V484.6h-1.55zM619.8 480.6h1.55V489.6h-1.55zM620.6 484.0h1.55V490.8h-1.55zM621.4 487.1h1.55V492.1h-1.55zM622.2 482.9h1.55V488.6h-1.55zM623.0 485.0h1.55V486.8h-1.55zM623.9 480.9h1.55V488.9h-1.55zM624.7 479.9h1.55V482.4h-1.55zM625.5 479.9h1.55V483.2h-1.55zM626.3 481.7h1.55V487.3h-1.55zM627.1 480.8h1.55V483.9h-1.55zM628.0 480.7h1.55V485.4h-1.55zM628.8 478.8h1.55V482.2h-1.55zM629.6 477.0h1.55V482.1h-1.55zM630.4 475.1h1.55V478.5h-1.55zM631.2 471.7h1.55V476.6h-1.55zM632.1 467.3h1.55V474.6h-1.55zM632.9 467.3h1.55V471.9h-1.55zM633.7 470.4h1.55V472.9h-1.55zM634.5 471.4h1.55V480.7h-1.55zM635.3 477.6h1.55V480.7h-1.55zM636.2 476.9h1.55V480.7h-1.55zM637.0 476.9h1.55V479.2h-1.55zM637.8 477.7h1.55V480.8h-1.55zM638.6 479.3h1.55V485.8h-1.55zM639.4 481.3h1.55V483.8h-1.55zM640.3 482.0h1.55V483.8h-1.55zM641.1 478.5h1.55V483.5h-1.55zM641.9 480.7h1.55V482.9h-1.55zM642.7 479.2h1.55V483.8h-1.55zM643.5 482.3h1.55V485.2h-1.55zM644.4 483.7h1.55V486.7h-1.55zM645.2 485.2h1.55V486.8h-1.55zM646.0 483.7h1.55V491.3h-1.55zM646.8 489.2h1.55V491.3h-1.55zM647.6 489.2h1.55V495.5h-1.55zM648.5 494.0h1.55V497.8h-1.55zM649.3 496.3h1.55V504.2h-1.55zM650.1 499.6h1.55V501.5h-1.55zM650.9 500.0h1.55V512.0h-1.55zM651.7 510.5h1.55V518.2h-1.55zM652.6 516.7h1.55V518.8h-1.55zM653.4 517.3h1.55V519.0h-1.55zM654.2 510.1h1.55V519.0h-1.55zM655.0 508.1h1.55V511.6h-1.55zM655.8 508.1h1.55V510.9h-1.55zM656.7 509.4h1.55V511.2h-1.55zM657.5 508.8h1.55V512.7h-1.55zM658.3 502.9h1.55V510.3h-1.55zM659.1 502.9h1.55V506.0h-1.55zM659.9 502.5h1.55V506.8h-1.55zM660.8 501.2h1.55V506.8h-1.55zM661.6 501.2h1.55V504.0h-1.55zM662.4 490.6h1.55V504.0h-1.55zM663.2 490.5h1.55V493.7h-1.55zM664.0 487.9h1.55V492.7h-1.55zM664.9 491.2h1.55V493.3h-1.55zM665.7 491.8h1.55V494.5h-1.55zM666.5 493.0h1.55V495.4h-1.55zM667.3 493.9h1.55V500.3h-1.55zM668.1 498.8h1.55V500.3h-1.55zM669.0 498.8h1.55V502.6h-1.55zM669.8 501.1h1.55V507.7h-1.55zM670.6 492.1h1.55V504.6h-1.55zM671.4 487.3h1.55V496.7h-1.55zM672.2 485.9h1.55V488.8h-1.55zM673.1 485.9h1.55V490.9h-1.55zM673.9 489.4h1.55V499.3h-1.55zM674.7 490.1h1.55V499.3h-1.55zM675.5 479.0h1.55V491.6h-1.55zM676.3 476.7h1.55V480.5h-1.55zM677.2 471.1h1.55V478.2h-1.55zM678.0 473.2h1.55V476.1h-1.55zM678.8 473.6h1.55V478.5h-1.55zM679.6 465.2h1.55V475.1h-1.55zM680.4 466.6h1.55V468.8h-1.55zM681.3 457.7h1.55V468.8h-1.55zM682.1 453.0h1.55V459.2h-1.55zM682.9 449.8h1.55V457.5h-1.55zM683.7 449.7h1.55V457.3h-1.55zM684.5 451.3h1.55V457.3h-1.55zM685.4 450.6h1.55V452.8h-1.55zM686.2 448.9h1.55V452.1h-1.55zM687.0 448.9h1.55V451.7h-1.55zM687.8 444.2h1.55V451.7h-1.55zM688.6 439.2h1.55V448.2h-1.55zM689.5 434.1h1.55V442.2h-1.55zM690.3 434.1h1.55V439.9h-1.55zM691.1 435.0h1.55V440.6h-1.55zM691.9 436.5h1.55V440.6h-1.55zM692.7 432.5h1.55V440.6h-1.55zM693.6 424.7h1.55V434.0h-1.55zM694.4 419.6h1.55V426.2h-1.55zM695.2 416.2h1.55V423.0h-1.55zM696.0 416.2h1.55V423.1h-1.55zM696.8 417.1h1.55V424.3h-1.55zM697.7 417.1h1.55V419.5h-1.55zM698.5 418.0h1.55V422.6h-1.55zM699.3 417.7h1.55V422.6h-1.55zM700.1 414.1h1.55V419.2h-1.55zM700.9 410.8h1.55V415.6h-1.55zM701.8 407.0h1.55V415.5h-1.55zM702.6 405.3h1.55V410.5h-1.55zM703.4 402.8h1.55V406.8h-1.55zM704.2 401.7h1.55V404.3h-1.55zM705.0 397.4h1.55V405.9h-1.55zM705.9 397.4h1.55V403.9h-1.55zM706.7 402.4h1.55V411.6h-1.55zM707.5 410.1h1.55V413.8h-1.55zM708.3 410.5h1.55V414.3h-1.55zM709.1 405.1h1.55V414.3h-1.55zM710.0 398.9h1.55V406.6h-1.55zM710.8 398.9h1.55V402.7h-1.55zM711.6 401.2h1.55V403.9h-1.55zM712.4 398.5h1.55V403.9h-1.55zM713.2 392.3h1.55V400.0h-1.55zM714.1 391.0h1.55V400.6h-1.55zM714.9 399.1h1.55V404.4h-1.55zM715.7 402.0h1.55V406.8h-1.55zM716.5 402.0h1.55V408.7h-1.55zM717.3 407.2h1.55V415.2h-1.55zM718.2 411.5h1.55V415.1h-1.55zM719.0 413.6h1.55V418.0h-1.55zM719.8 416.5h1.55V423.9h-1.55zM720.6 408.6h1.55V420.7h-1.55zM721.4 404.4h1.55V410.1h-1.55zM722.3 404.4h1.55V407.5h-1.55zM723.1 406.0h1.55V413.5h-1.55zM723.9 412.0h1.55V417.9h-1.55zM724.7 416.4h1.55V419.8h-1.55zM725.5 418.3h1.55V423.1h-1.55zM726.4 420.0h1.55V425.2h-1.55zM727.2 423.7h1.55V428.7h-1.55zM728.0 427.2h1.55V432.0h-1.55zM728.8 424.5h1.55V430.6h-1.55zM729.6 424.5h1.55V427.9h-1.55zM730.5 426.4h1.55V433.1h-1.55zM731.3 431.6h1.55V438.2h-1.55zM732.1 436.7h1.55V438.4h-1.55zM732.9 434.0h1.55V438.4h-1.55zM733.7 434.0h1.55V436.2h-1.55zM734.6 429.7h1.55V436.2h-1.55zM735.4 432.4h1.55V437.5h-1.55zM736.2 436.0h1.55V441.4h-1.55zM737.0 439.9h1.55V446.9h-1.55zM737.8 442.6h1.55V446.7h-1.55zM738.7 445.2h1.55V450.8h-1.55zM739.5 449.3h1.55V454.6h-1.55zM740.3 453.1h1.55V463.7h-1.55zM741.1 462.2h1.55V471.1h-1.55zM741.9 469.6h1.55V477.9h-1.55zM742.8 475.0h1.55V480.2h-1.55zM743.6 473.6h1.55V476.5h-1.55zM744.4 473.6h1.55V477.8h-1.55zM745.2 476.3h1.55V478.7h-1.55zM746.0 477.2h1.55V485.5h-1.55zM746.9 481.9h1.55V491.0h-1.55zM747.7 487.1h1.55V497.3h-1.55zM748.5 487.5h1.55V497.3h-1.55zM749.3 483.2h1.55V489.0h-1.55zM750.1 480.1h1.55V484.7h-1.55zM751.0 480.1h1.55V490.0h-1.55zM751.8 480.7h1.55V486.8h-1.55zM752.6 476.7h1.55V482.2h-1.55zM753.4 475.4h1.55V483.8h-1.55zM754.2 482.3h1.55V490.8h-1.55zM755.1 489.0h1.55V490.8h-1.55zM755.9 485.7h1.55V490.5h-1.55zM756.7 479.8h1.55V487.2h-1.55zM757.5 475.9h1.55V481.3h-1.55zM758.3 475.9h1.55V478.6h-1.55zM759.2 476.7h1.55V478.6h-1.55zM760.0 476.7h1.55V481.7h-1.55zM760.8 480.2h1.55V484.8h-1.55zM761.6 483.3h1.55V485.7h-1.55zM762.4 479.1h1.55V485.7h-1.55zM763.3 477.2h1.55V480.6h-1.55zM764.1 474.3h1.55V482.0h-1.55zM764.9 474.3h1.55V477.3h-1.55zM765.7 475.8h1.55V483.3h-1.55zM766.5 481.8h1.55V488.0h-1.55zM767.4 486.5h1.55V490.3h-1.55zM768.2 485.6h1.55V490.3h-1.55zM769.0 480.6h1.55V487.1h-1.55zM769.8 478.6h1.55V485.1h-1.55zM770.6 483.6h1.55V486.9h-1.55zM771.5 481.3h1.55V486.9h-1.55zM772.3 475.9h1.55V482.8h-1.55zM773.1 475.9h1.55V482.7h-1.55zM773.9 478.7h1.55V483.5h-1.55zM774.7 473.3h1.55V483.5h-1.55zM775.6 470.4h1.55V478.0h-1.55zM776.4 468.7h1.55V471.9h-1.55zM777.2 468.4h1.55V471.9h-1.55zM778.0 463.9h1.55V469.9h-1.55zM778.8 466.7h1.55V468.5h-1.55zM779.7 467.0h1.55V480.0h-1.55zM780.5 475.8h1.55V485.7h-1.55zM781.3 469.2h1.55V482.6h-1.55zM782.1 463.7h1.55V473.7h-1.55zM782.9 459.3h1.55V465.2h-1.55zM783.8 453.1h1.55V460.8h-1.55zM784.6 456.1h1.55V459.9h-1.55zM785.4 458.4h1.55V460.3h-1.55zM786.2 458.8h1.55V467.4h-1.55zM787.0 465.9h1.55V476.7h-1.55zM787.9 475.2h1.55V482.0h-1.55zM788.7 480.5h1.55V487.6h-1.55zM789.5 486.1h1.55V498.0h-1.55zM790.3 493.1h1.55V498.1h-1.55zM791.1 491.1h1.55V498.1h-1.55zM792.0 487.0h1.55V495.1h-1.55zM792.8 481.3h1.55V489.8h-1.55zM793.6 476.2h1.55V482.8h-1.55zM794.4 472.1h1.55V477.7h-1.55zM795.2 468.9h1.55V473.6h-1.55zM796.1 462.7h1.55V470.4h-1.55zM796.9 455.8h1.55V464.2h-1.55zM797.7 451.8h1.55V457.3h-1.55zM798.5 451.8h1.55V454.8h-1.55zM799.3 450.9h1.55V454.8h-1.55zM800.2 453.0h1.55V457.5h-1.55zM801.0 455.5h1.55V457.5h-1.55zM801.8 455.5h1.55V463.2h-1.55zM802.6 458.3h1.55V461.0h-1.55zM803.4 457.5h1.55V461.0h-1.55zM804.3 447.4h1.55V459.0h-1.55zM805.1 437.8h1.55V448.9h-1.55zM805.9 429.9h1.55V439.3h-1.55zM806.7 429.9h1.55V434.8h-1.55zM807.5 433.3h1.55V442.2h-1.55zM808.4 440.7h1.55V450.5h-1.55zM809.2 449.0h1.55V454.3h-1.55zM810.0 448.6h1.55V454.3h-1.55zM810.8 446.6h1.55V450.1h-1.55zM811.6 448.1h1.55V453.9h-1.55zM812.5 450.9h1.55V455.6h-1.55zM813.3 451.9h1.55V455.6h-1.55zM814.1 446.1h1.55V454.6h-1.55zM814.9 446.1h1.55V450.5h-1.55zM815.7 446.8h1.55V451.3h-1.55zM816.6 449.8h1.55V454.5h-1.55zM817.4 450.5h1.55V456.4h-1.55zM818.2 453.9h1.55V456.4h-1.55zM819.0 453.3h1.55V458.3h-1.55zM819.8 447.1h1.55V454.8h-1.55zM820.7 447.1h1.55V448.6h-1.55zM821.5 447.1h1.55V453.8h-1.55zM822.3 452.3h1.55V461.7h-1.55zM823.1 457.2h1.55V463.0h-1.55zM823.9 461.5h1.55V472.4h-1.55zM824.8 467.0h1.55V472.4h-1.55zM825.6 468.4h1.55V471.0h-1.55zM826.4 468.4h1.55V469.9h-1.55zM827.2 468.4h1.55V470.2h-1.55zM828.0 468.7h1.55V472.6h-1.55zM828.9 465.4h1.55V472.6h-1.55zM829.7 459.0h1.55V466.9h-1.55zM830.5 454.9h1.55V460.5h-1.55zM831.3 455.0h1.55V459.1h-1.55zM832.1 456.8h1.55V466.7h-1.55zM833.0 463.6h1.55V468.3h-1.55zM833.8 458.3h1.55V468.3h-1.55zM834.6 455.0h1.55V465.4h-1.55zM835.4 453.8h1.55V457.9h-1.55zM836.2 449.7h1.55V455.3h-1.55zM837.1 448.1h1.55V453.7h-1.55zM837.9 446.6h1.55V453.4h-1.55zM838.7 451.9h1.55V455.2h-1.55zM839.5 453.7h1.55V462.1h-1.55zM840.3 458.5h1.55V463.7h-1.55zM841.2 459.1h1.55V470.8h-1.55zM842.0 465.7h1.55V469.0h-1.55zM842.8 463.9h1.55V468.4h-1.55zM843.6 459.2h1.55V467.6h-1.55zM844.4 457.8h1.55V460.7h-1.55zM845.3 456.6h1.55V459.3h-1.55zM846.1 453.0h1.55V458.1h-1.55zM846.9 451.6h1.55V454.5h-1.55zM847.7 449.9h1.55V454.4h-1.55zM848.5 448.8h1.55V451.4h-1.55zM849.4 443.8h1.55V450.3h-1.55zM850.2 442.2h1.55V447.7h-1.55zM851.0 440.3h1.55V443.7h-1.55zM851.8 437.8h1.55V443.7h-1.55zM852.6 436.9h1.55V439.3h-1.55zM853.5 436.0h1.55V439.7h-1.55zM854.3 434.2h1.55V439.1h-1.55zM855.1 435.1h1.55V439.1h-1.55zM855.9 428.3h1.55V436.6h-1.55zM856.7 426.8h1.55V432.0h-1.55zM857.6 420.8h1.55V428.3h-1.55zM858.4 415.5h1.55V422.3h-1.55zM859.2 416.2h1.55V420.0h-1.55zM860.0 413.8h1.55V419.6h-1.55zM860.8 418.1h1.55V429.7h-1.55zM861.7 426.9h1.55V432.6h-1.55zM862.5 431.1h1.55V433.9h-1.55zM863.3 432.4h1.55V434.8h-1.55zM864.1 431.7h1.55V434.8h-1.55zM864.9 430.1h1.55V433.2h-1.55zM865.8 428.8h1.55V431.6h-1.55zM866.6 426.3h1.55V430.3h-1.55zM867.4 424.7h1.55V427.8h-1.55zM868.2 424.7h1.55V430.3h-1.55zM869.0 428.8h1.55V433.2h-1.55zM869.9 431.7h1.55V434.6h-1.55zM870.7 432.4h1.55V435.8h-1.55zM871.5 428.9h1.55V435.3h-1.55zM872.3 421.5h1.55V430.4h-1.55zM873.1 418.4h1.55V425.7h-1.55zM874.0 416.1h1.55V419.9h-1.55zM874.8 416.1h1.55V420.5h-1.55zM875.6 419.0h1.55V423.7h-1.55zM876.4 420.4h1.55V424.7h-1.55zM877.2 423.2h1.55V427.3h-1.55zM878.1 425.1h1.55V427.3h-1.55zM878.9 423.4h1.55V426.6h-1.55zM879.7 423.4h1.55V426.5h-1.55zM880.5 420.5h1.55V426.5h-1.55zM881.3 423.6h1.55V432.5h-1.55zM882.2 428.7h1.55V435.7h-1.55zM883.0 434.2h1.55V440.7h-1.55zM883.8 437.2h1.55V440.7h-1.55zM884.6 437.2h1.55V442.6h-1.55zM885.4 437.9h1.55V442.6h-1.55zM886.3 437.9h1.55V440.6h-1.55zM887.1 436.5h1.55V440.6h-1.55zM887.9 438.5h1.55V440.2h-1.55zM888.7 431.7h1.55V440.2h-1.55zM889.5 430.0h1.55V433.2h-1.55zM890.4 430.0h1.55V433.3h-1.55zM891.2 431.8h1.55V435.1h-1.55zM892.0 430.7h1.55V438.7h-1.55zM892.8 434.2h1.55V441.8h-1.55zM893.6 438.2h1.55V441.8h-1.55zM894.5 438.7h1.55V441.3h-1.55zM895.3 438.1h1.55V440.2h-1.55zM896.1 435.8h1.55V441.5h-1.55zM896.9 440.0h1.55V448.6h-1.55zM897.7 442.3h1.55V447.5h-1.55zM898.6 444.2h1.55V449.7h-1.55zM899.4 448.2h1.55V452.0h-1.55zM900.2 448.5h1.55V450.3h-1.55zM901.0 448.8h1.55V453.6h-1.55zM901.8 450.1h1.55V457.7h-1.55zM902.7 456.2h1.55V464.2h-1.55zM903.5 458.3h1.55V461.4h-1.55zM904.3 458.3h1.55V459.9h-1.55zM905.1 455.8h1.55V461.4h-1.55zM905.9 458.1h1.55V461.4h-1.55zM906.8 458.1h1.55V460.6h-1.55zM907.6 459.1h1.55V463.4h-1.55zM908.4 457.9h1.55V466.2h-1.55zM909.2 451.3h1.55V459.4h-1.55zM910.0 448.4h1.55V455.6h-1.55zM910.9 448.4h1.55V452.5h-1.55zM911.7 447.1h1.55V452.5h-1.55zM912.5 447.1h1.55V452.0h-1.55zM913.3 446.4h1.55V452.0h-1.55zM914.1 445.0h1.55V450.0h-1.55zM915.0 445.0h1.55V449.0h-1.55zM915.8 444.2h1.55V446.5h-1.55zM916.6 444.2h1.55V447.0h-1.55zM917.4 443.9h1.55V447.0h-1.55zM918.2 443.0h1.55V445.4h-1.55zM919.1 441.7h1.55V444.5h-1.55zM919.9 440.1h1.55V443.2h-1.55zM920.7 440.1h1.55V444.1h-1.55zM921.5 437.6h1.55V444.1h-1.55zM922.3 433.5h1.55V439.1h-1.55zM923.2 433.1h1.55V437.8h-1.55zM924.0 433.1h1.55V435.3h-1.55zM924.8 433.8h1.55V435.6h-1.55zM925.6 434.1h1.55V435.7h-1.55zM926.4 434.2h1.55V438.3h-1.55zM927.3 435.5h1.55V438.8h-1.55zM928.1 437.3h1.55V445.0h-1.55zM928.9 442.5h1.55V445.0h-1.55zM929.7 442.5h1.55V447.5h-1.55zM930.5 443.6h1.55V446.7h-1.55zM931.4 438.9h1.55V448.8h-1.55zM932.2 437.0h1.55V440.4h-1.55zM933.0 437.0h1.55V441.3h-1.55zM933.8 438.3h1.55V443.5h-1.55zM934.6 433.7h1.55V440.2h-1.55zM935.5 435.9h1.55V444.6h-1.55zM936.3 440.1h1.55V451.2h-1.55zM937.1 449.7h1.55V453.9h-1.55zM937.9 450.5h1.55V453.9h-1.55zM938.7 446.0h1.55V452.0h-1.55zM939.6 445.6h1.55V448.9h-1.55zM940.4 445.6h1.55V448.4h-1.55zM941.2 444.3h1.55V448.4h-1.55zM942.0 443.7h1.55V448.4h-1.55zM942.8 443.7h1.55V445.3h-1.55zM943.7 440.7h1.55V445.3h-1.55zM944.5 440.1h1.55V444.8h-1.55zM945.3 440.1h1.55V448.9h-1.55zM946.1 443.8h1.55V446.8h-1.55zM946.9 439.6h1.55V447.2h-1.55zM947.8 438.0h1.55V444.3h-1.55zM948.6 437.8h1.55V439.5h-1.55zM949.4 432.9h1.55V439.3h-1.55zM950.2 435.3h1.55V437.0h-1.55zM951.0 434.3h1.55V436.8h-1.55zM951.9 432.1h1.55V435.8h-1.55zM952.7 430.6h1.55V435.1h-1.55zM953.5 429.3h1.55V432.1h-1.55zM954.3 427.0h1.55V432.3h-1.55zM955.1 427.0h1.55V429.5h-1.55zM956.0 428.0h1.55V435.3h-1.55zM956.8 429.0h1.55V435.3h-1.55zM957.6 429.0h1.55V431.6h-1.55zM958.4 430.1h1.55V435.6h-1.55zM959.2 434.1h1.55V439.6h-1.55zM960.1 436.9h1.55V439.6h-1.55zM960.9 430.6h1.55V438.4h-1.55zM961.7 428.1h1.55V433.7h-1.55zM962.5 425.1h1.55V429.6h-1.55zM963.3 423.1h1.55V426.6h-1.55zM964.2 421.3h1.55V424.6h-1.55zM965.0 415.5h1.55V422.8h-1.55zM965.8 413.7h1.55V418.5h-1.55zM966.6 413.7h1.55V416.3h-1.55zM967.4 413.3h1.55V422.5h-1.55zM968.3 411.1h1.55V422.5h-1.55zM969.1 407.2h1.55V415.6h-1.55z" fill="#fc0000"/></svg>
<div class="split" style="top:201px"></div><div class="split" style="top:379px"></div>
<div id="title"></div><svg class="ic" style="left:8px;top:5.5px" width="12" height="12" viewBox="0 0 12 12"><path d="M.5 .4V11H10.9" fill="none" stroke="#8a8a8a" stroke-width="1"/><path d="M2.7 5.5V9.8" stroke="#f2202e" stroke-width="1.6"/><path d="M4.5 2V8.2" stroke="#2a7ae4" stroke-width="1.5"/><path d="M6.4 .8V6.3" stroke="#f2202e" stroke-width="1.6"/><path d="M8 2.7V7" stroke="#2a7ae4" stroke-width="1.3"/><path d="M9.7 1.6V8.2" stroke="#f2202e" stroke-width="1.9"/></svg><span class="t" style="left:23.30px;top:5.25px;font:10.30px/10.30px 'Liberation Sans','Noto Sans CJK JP',sans-serif;color:#000">金</span><span class="t" style="left:32.90px;top:5.40px;font:10.20px/11.73px 'Liberation Sans',sans-serif;color:#000;transform:scaleX(1.0000)">1</span><span class="t" style="left:37.20px;top:5.25px;font:10.30px/10.30px 'Liberation Sans','Noto Sans CJK JP',sans-serif;color:#000">分</span><span class="t" style="left:46.50px;top:5.25px;font:10.30px/10.30px 'Liberation Sans','Noto Sans CJK JP',sans-serif;color:#000">足</span><span class="t" style="left:57.40px;top:5.40px;font:10.20px/11.73px 'Liberation Sans',sans-serif;color:#000;transform:scaleX(0.9175)">[</span><span class="t" style="left:59.90px;top:5.40px;font:10.20px/11.73px 'Liberation Sans',sans-serif;color:#000;transform:scaleX(0.8950)">2025/08</span><span class="t" style="left:93.10px;top:5.40px;font:10.20px/11.73px 'Liberation Sans',sans-serif;color:#000;transform:scaleX(0.9175)">]</span><span class="t" style="left:96.70px;top:5.40px;font:10.20px/11.73px 'Liberation Sans',sans-serif;color:#000;transform:scaleX(0.7556)">1.00</span><span class="t" style="left:115.60px;top:5.40px;font:10.20px/11.73px 'Liberation Sans',sans-serif;color:#000;transform:scaleX(1.0599)">-</span><span class="t" style="left:123.90px;top:5.25px;font:10.30px/10.30px 'Liberation Sans','Noto Sans CJK JP',sans-serif;color:#000">白</span><span class="t" style="left:133.30px;top:5.25px;font:10.30px/10.30px 'Liberation Sans','Noto Sans CJK JP',sans-serif;color:#000">金</span><span class="t" style="left:142.50px;top:5.40px;font:10.20px/11.73px 'Liberation Sans',sans-serif;color:#000;transform:scaleX(1.0000)">1</span><span class="t" style="left:146.80px;top:5.25px;font:10.30px/10.30px 'Liberation Sans','Noto Sans CJK JP',sans-serif;color:#000">分</span><span class="t" style="left:156.10px;top:5.25px;font:10.30px/10.30px 'Liberation Sans','Noto Sans CJK JP',sans-serif;color:#000">足</span><span class="t" style="left:167.00px;top:5.40px;font:10.20px/11.73px 'Liberation Sans',sans-serif;color:#000;transform:scaleX(0.9175)">[</span><span class="t" style="left:169.50px;top:5.40px;font:10.20px/11.73px 'Liberation Sans',sans-serif;color:#000;transform:scaleX(0.8950)">2025/08</span><span class="t" style="left:202.70px;top:5.40px;font:10.20px/11.73px 'Liberation Sans',sans-serif;color:#000;transform:scaleX(0.9175)">]</span><span class="t" style="left:206.30px;top:5.40px;font:10.20px/11.73px 'Liberation Sans',sans-serif;color:#000;transform:scaleX(0.7556)">1.00</span><svg class="ic" style="left:954px;top:5px" width="14" height="14" viewBox="0 0 14 14"><rect x="1.6" y="1.6" width="8.6" height="9.6" fill="#ececec" stroke="#9a9a9a" stroke-width="1"/><rect x="4.6" y="3.6" width="7.6" height="6.2" rx="1" fill="#cfcfcf" stroke="#7e7e7e" stroke-width="1.1"/></svg><div class="cb" style="left:973.2px;width:13.2px"></div><div class="cb" style="left:989.1px;width:12.9px"></div><div class="cb" style="left:1004.8px;width:13.4px"></div><svg class="ic" style="left:973px;top:4px" width="46" height="15" viewBox="0 0 46 15"><path d="M4 9.8H8.8" stroke="#555" stroke-width="1.5"/><rect x="19.7" y="4.6" width="5.8" height="5.8" fill="none" stroke="#5a5a5a" stroke-width="1.1"/><path d="M19.2 4.7H26" stroke="#5a5a5a" stroke-width="1.7"/><path d="M35.3 4.4L41.7 10.8M41.7 4.4L35.3 10.8" stroke="#5a5a5a" stroke-width="1.3"/></svg>
<div id="tb"></div><span class="t" style="left:9.10px;top:24.00px;font:9.80px/9.80px 'Liberation Sans','Noto Sans CJK JP',sans-serif;color:#2b2b2b">金</span><span class="t" style="left:27.40px;top:23.70px;font:10.20px/11.73px 'Liberation Sans',sans-serif;color:#2b2b2b;transform:scaleX(0.8842)">2025/08</span><div class="inp" style="left:65px;width:26.6px"></div><span class="t" style="left:66.60px;top:23.10px;font:10.20px/11.73px 'Liberation Sans',sans-serif;color:#111;transform:scaleX(0.7354)">1.00</span><div class="spin" style="left:91.8px"></div><svg class="ic" style="left:91.8px;top:22.5px" width="10.5" height="13.5" viewBox="0 0 10.5 13.5"><path d="M2.9 5.3L5.2 2.3L7.5 5.3ZM2.9 8.1L5.2 11.1L7.5 8.1Z" fill="#111"/></svg><div class="sep" style="left:106.8px"></div><span class="t" style="left:113.60px;top:24.00px;font:9.80px/9.80px 'Liberation Sans','Noto Sans CJK JP',sans-serif;color:#2b2b2b">白</span><span class="t" style="left:122.80px;top:24.00px;font:9.80px/9.80px 'Liberation Sans','Noto Sans CJK JP',sans-serif;color:#2b2b2b">金</span><span class="t" style="left:141.00px;top:23.70px;font:10.20px/11.73px 'Liberation Sans',sans-serif;color:#2b2b2b;transform:scaleX(0.8842)">2025/08</span><div class="inp" style="left:178.8px;width:26.3px"></div><span class="t" style="left:180.40px;top:23.10px;font:10.20px/11.73px 'Liberation Sans',sans-serif;color:#111;transform:scaleX(0.7354)">1.00</span><div class="spin" style="left:205.4px"></div><svg class="ic" style="left:205.4px;top:22.5px" width="10.5" height="13.5" viewBox="0 0 10.5 13.5"><path d="M2.9 5.3L5.2 2.3L7.5 5.3ZM2.9 8.1L5.2 11.1L7.5 8.1Z" fill="#111"/></svg><div class="sep" style="left:220.8px"></div><span class="t" style="left:226.80px;top:24.00px;font:9.80px/9.80px 'Liberation Sans','Noto Sans CJK JP',sans-serif;color:#2b2b2b">分</span><span class="t" style="left:236.00px;top:24.00px;font:9.80px/9.80px 'Liberation Sans','Noto Sans CJK JP',sans-serif;color:#2b2b2b">足</span><div class="dd" style="left:250.6px"></div><div class="inp" style="left:258.6px;width:23.6px"></div><span class="t" style="left:260.20px;top:23.10px;font:10.20px/11.73px 'Liberation Sans',sans-serif;color:#111;transform:scaleX(0.8021)">1200</span><div class="spin" style="left:282.5px"></div><svg class="ic" style="left:282.5px;top:22.5px" width="10.5" height="13.5" viewBox="0 0 10.5 13.5"><path d="M2.9 5.3L5.2 2.3L7.5 5.3ZM2.9 8.1L5.2 11.1L7.5 8.1Z" fill="#111"/></svg><span class="t" style="left:298.70px;top:23.70px;font:10.20px/11.73px 'Liberation Sans',sans-serif;color:#2b2b2b;transform:scaleX(1.0000)">1</span><span class="t" style="left:303.00px;top:24.00px;font:9.80px/9.80px 'Liberation Sans','Noto Sans CJK JP',sans-serif;color:#2b2b2b">分</span><span class="t" style="left:312.30px;top:24.00px;font:9.80px/9.80px 'Liberation Sans','Noto Sans CJK JP',sans-serif;color:#2b2b2b">足</span><div class="dd" style="left:327.6px"></div><div class="sep" style="left:337.9px"></div><svg class="ic" style="left:340.3px;top:22.1px" width="13.4" height="13.4" viewBox="0 0 13.4 13.4"><rect x="0" y="0" width="13.4" height="13.4" fill="#d3d6dd"/><rect x="5" y="5.3" width="7.8" height="7.5" fill="#e9eaee"/><path d="M0 .5H13.4M.5 0V13.4" stroke="#8b8f98" stroke-width="1"/><path d="M.8 12.9H13.4M12.9 .8V13.4" stroke="#eef0f4" stroke-width="1"/><path d="M4.3 1V12.6M1 4.6H12.6" stroke="#7a82dc" stroke-width="1.3"/><path d="M6.4 6.9H10.2L6.4 10.7Z" fill="#a21fc2"/><path d="M7.8 8.3L11 11.5" stroke="#a21fc2" stroke-width="1.7"/></svg><div class="sep" style="left:360.6px"></div><svg class="ic" style="left:363.3px;top:22.1px" width="13.7" height="13.4" viewBox="0 0 13.7 13.4"><rect x="0" y="0" width="13.7" height="13.4" fill="#a9adb5"/><path d="M0 .5H13.7M.5 0V13.4" stroke="#7f838c" stroke-width="1"/><path d="M.8 12.9H13.7M13.2 .8V13.4" stroke="#c9cdd3" stroke-width="1"/><path d="M2.7 3.1L10.4 5.9L7.9 7.6L11.1 10.9L9.6 12.2L6.5 8.9L5.1 11.2Z" fill="#8e7ee8" stroke="#6252c6" stroke-width=".7" stroke-linejoin="round"/><path d="M4.6 5.1L8.2 8.6" stroke="#f4f0ff" stroke-width="1.3" stroke-linecap="round"/></svg><svg class="ic" style="left:382.3px;top:22.8px" width="11" height="13" viewBox="0 0 11 13"><path d="M2.6 12.4C1.6 10.8 .4 9.2 .5 8C.6 7.1 1.7 6.9 2.3 7.7L3.1 8.7L2.7 3.6C2.6 2.5 4.1 2.3 4.3 3.4L4.5 5.6V2.1C4.5 1 6.1 1 6.1 2.1L6.2 5.4L6.6 2.5C6.7 1.5 8.2 1.6 8.2 2.7L8 5.8L8.7 3.9C9 3 10.3 3.3 10.2 4.3C10 6.7 9.9 8.6 9.3 10.1C8.9 11.1 8.6 11.7 8.2 12.4Z" fill="#fff8ea" stroke="#e29a3c" stroke-width="1.15" stroke-linejoin="round"/></svg><svg class="ic" style="left:400.6px;top:22.4px" width="13" height="13" viewBox="0 0 13 13"><path d="M9.3 1.2L11.7 3.5L4.6 10.6L1.2 12L2.4 8.4Z" fill="#f4b458" stroke="#e49a36" stroke-width=".8" stroke-linejoin="round"/><path d="M9 2.9L3.9 8" stroke="#ffe7b6" stroke-width="1.1"/><path d="M1.2 12L2.9 11.3L1.9 10.3Z" fill="#8a5a22"/></svg><svg class="ic" style="left:418.6px;top:22.2px" width="13" height="13.4" viewBox="0 0 13 13.4"><path d="M9 1.2L11.4 3.5L5 10.1L1.4 11.9L2.8 8Z" fill="#7fadf0" stroke="#3c6fd6" stroke-width=".8" stroke-linejoin="round"/><path d="M8.8 2.9L4 7.8" stroke="#e4efff" stroke-width="1.1"/><path d="M9.3 6.9L12 9.6L9.3 12.3L6.6 9.6Z" fill="#27489c"/></svg><div class="sep" style="left:438.9px"></div><svg class="ic" style="left:443.2px;top:23.8px" width="11" height="10.8" viewBox="0 0 11 10.8"><rect x="0" y="0" width="11" height="10.8" fill="#dedede"/><path d="M.4 0V10.4H11" fill="none" stroke="#8e8e8e" stroke-width=".9"/><path d="M3 9.8V3.2H8.4V9.8Z" fill="#a9ccf4"/><path d="M1.9 9.8V6.6" stroke="#2c8cf2" stroke-width="1.5"/><path d="M4.6 9.8V1.4" stroke="#2c8cf2" stroke-width="1.5"/><path d="M7.2 9.8V2.8" stroke="#2c8cf2" stroke-width="1.5"/><path d="M9.4 9.8V6.2" stroke="#2c8cf2" stroke-width="1.5"/></svg><div class="dd" style="left:456.6px"></div><svg class="ic" style="left:465.3px;top:23.8px" width="11" height="10.8" viewBox="0 0 11 10.8"><rect x="0" y="0" width="11" height="10.8" fill="#d9d9d9"/><path d="M.4 0V10.4H11" fill="none" stroke="#8e8e8e" stroke-width=".9"/><path d="M3 9.8V3.2H8.4V9.8Z" fill="#a9ccf4"/><path d="M1.9 9.8V6.6" stroke="#2c8cf2" stroke-width="1.5"/><path d="M4.6 9.8V1.4" stroke="#2c8cf2" stroke-width="1.5"/><path d="M7.2 9.8V2.8" stroke="#2c8cf2" stroke-width="1.5"/><path d="M9.4 9.8V6.2" stroke="#2c8cf2" stroke-width="1.5"/><path d="M1.4 1.2L9.6 9.4M9.6 1.2L1.4 9.4" stroke="#f03a4c" stroke-width="1.2"/></svg><div class="sep" style="left:484.4px"></div><svg class="ic" style="left:488px;top:22.2px" width="12" height="13.4" viewBox="0 0 12 13.4"><path d="M4.6 2.9A4.5 4.5 0 1 0 9.3 10.4" fill="none" stroke="#3a9cf0" stroke-width="1.9"/><path d="M3 .7H6.9V4.9Z" fill="#2a5ee2"/><path d="M7.1 8.9V4.5H9A1.25 1.25 0 0 1 9 7H7.1M8.8 7L10.3 8.9" fill="none" stroke="#2b82e4" stroke-width="1.35"/></svg><svg class="ic" style="left:999.6px;top:22.8px" width="13.4" height="12.8" viewBox="0 0 13.4 12.8"><path d="M1.4 11.6L7.4 5.6" stroke="#6a6af4" stroke-width="2.0" stroke-linecap="round"/><path d="M10.9 1.3A3.3 3.3 0 1 0 12.3 4.6L10.2 5.2L8.6 3.7L9.1 1.6Z" fill="#8d8df6" stroke="#6a6af4" stroke-width=".7"/></svg>
<span class="t" style="left:6.20px;top:39.90px;font:9.80px/9.80px 'Liberation Sans','Noto Sans CJK JP',sans-serif;color:#dadada">時</span><span class="t" style="left:16.00px;top:39.90px;font:9.80px/9.80px 'Liberation Sans','Noto Sans CJK JP',sans-serif;color:#dadada">刻</span><span class="t m" style="left:25.80px;top:39.82px;font:10.40px/11.96px 'Liberation Sans',sans-serif;color:#dadada;transform:scaleX(0.8472)"><i>:</i>05<i>:</i>49<i>&nbsp;</i></span><span class="t" style="left:60.10px;top:39.90px;font:9.80px/9.80px 'Liberation Sans','Noto Sans CJK JP',sans-serif;color:#dadada">始</span><span class="t" style="left:69.90px;top:39.90px;font:9.80px/9.80px 'Liberation Sans','Noto Sans CJK JP',sans-serif;color:#dadada">値</span><span class="t m" style="left:79.70px;top:39.82px;font:10.40px/11.96px 'Liberation Sans',sans-serif;color:#dadada;transform:scaleX(0.8472)"><i>:</i>11<i>,</i>569<i>&nbsp;</i></span><span class="t" style="left:118.90px;top:39.90px;font:9.80px/9.80px 'Liberation Sans','Noto Sans CJK JP',sans-serif;color:#dadada">高</span><span class="t" style="left:128.70px;top:39.90px;font:9.80px/9.80px 'Liberation Sans','Noto Sans CJK JP',sans-serif;color:#dadada">値</span><span class="t m" style="left:138.50px;top:39.82px;font:10.40px/11.96px 'Liberation Sans',sans-serif;color:#dadada;transform:scaleX(0.8472)"><i>:</i>11<i>,</i>570<i>&nbsp;</i></span><span class="t" style="left:177.70px;top:39.90px;font:9.80px/9.80px 'Liberation Sans','Noto Sans CJK JP',sans-serif;color:#dadada">安</span><span class="t" style="left:187.50px;top:39.90px;font:9.80px/9.80px 'Liberation Sans','Noto Sans CJK JP',sans-serif;color:#dadada">値</span><span class="t m" style="left:197.30px;top:39.82px;font:10.40px/11.96px 'Liberation Sans',sans-serif;color:#dadada;transform:scaleX(0.8472)"><i>:</i>11<i>,</i>569<i>&nbsp;</i></span><span class="t" style="left:236.50px;top:39.90px;font:9.80px/9.80px 'Liberation Sans','Noto Sans CJK JP',sans-serif;color:#dadada">終</span><span class="t" style="left:246.30px;top:39.90px;font:9.80px/9.80px 'Liberation Sans','Noto Sans CJK JP',sans-serif;color:#dadada">値</span><span class="t m" style="left:256.10px;top:39.82px;font:10.40px/11.96px 'Liberation Sans',sans-serif;color:#dadada;transform:scaleX(0.8472)"><i>:</i>11<i>,</i>570</span><span class="t" style="left:6.20px;top:206.80px;font:9.80px/9.80px 'Liberation Sans','Noto Sans CJK JP',sans-serif;color:#dadada">時</span><span class="t" style="left:16.00px;top:206.80px;font:9.80px/9.80px 'Liberation Sans','Noto Sans CJK JP',sans-serif;color:#dadada">刻</span><span class="t m" style="left:25.80px;top:206.72px;font:10.40px/11.96px 'Liberation Sans',sans-serif;color:#dadada;transform:scaleX(0.8472)"><i>:</i>05<i>:</i>49<i>&nbsp;</i></span><span class="t" style="left:60.10px;top:206.80px;font:9.80px/9.80px 'Liberation Sans','Noto Sans CJK JP',sans-serif;color:#dadada">始</span><span class="t" style="left:69.90px;top:206.80px;font:9.80px/9.80px 'Liberation Sans','Noto Sans CJK JP',sans-serif;color:#dadada">値</span><span class="t m" style="left:79.70px;top:206.72px;font:10.40px/11.96px 'Liberation Sans',sans-serif;color:#dadada;transform:scaleX(0.8472)"><i>:</i><i>-</i><i>-</i><i>-</i><i>&nbsp;</i></span><span class="t" style="left:104.20px;top:206.80px;font:9.80px/9.80px 'Liberation Sans','Noto Sans CJK JP',sans-serif;color:#dadada">高</span><span class="t" style="left:114.00px;top:206.80px;font:9.80px/9.80px 'Liberation Sans','Noto Sans CJK JP',sans-serif;color:#dadada">値</span><span class="t m" style="left:123.80px;top:206.72px;font:10.40px/11.96px 'Liberation Sans',sans-serif;color:#dadada;transform:scaleX(0.8472)"><i>:</i><i>-</i><i>-</i><i>-</i><i>&nbsp;</i></span><span class="t" style="left:148.30px;top:206.80px;font:9.80px/9.80px 'Liberation Sans','Noto Sans CJK JP',sans-serif;color:#dadada">安</span><span class="t" style="left:158.10px;top:206.80px;font:9.80px/9.80px 'Liberation Sans','Noto Sans CJK JP',sans-serif;color:#dadada">値</span><span class="t m" style="left:167.90px;top:206.72px;font:10.40px/11.96px 'Liberation Sans',sans-serif;color:#dadada;transform:scaleX(0.8472)"><i>:</i><i>-</i><i>-</i><i>-</i><i>&nbsp;</i></span><span class="t" style="left:192.40px;top:206.80px;font:9.80px/9.80px 'Liberation Sans','Noto Sans CJK JP',sans-serif;color:#dadada">終</span><span class="t" style="left:202.20px;top:206.80px;font:9.80px/9.80px 'Liberation Sans','Noto Sans CJK JP',sans-serif;color:#dadada">値</span><span class="t m" style="left:212.00px;top:206.72px;font:10.40px/11.96px 'Liberation Sans',sans-serif;color:#dadada;transform:scaleX(0.8472)"><i>:</i><i>-</i><i>-</i><i>-</i></span><span class="t m" style="left:5.90px;top:384.82px;font:10.40px/11.96px 'Liberation Sans',sans-serif;color:#dadada;transform:scaleX(0.8472)"><i>[</i></span><span class="t" style="left:10.80px;top:384.90px;font:9.80px/9.80px 'Liberation Sans','Noto Sans CJK JP',sans-serif;color:#dadada">金</span><span class="t m" style="left:20.60px;top:384.82px;font:10.40px/11.96px 'Liberation Sans',sans-serif;color:#dadada;transform:scaleX(0.8472)"><i>&nbsp;</i>25<i>/</i>08<i>&nbsp;</i>11<i>,</i>570</span><span class="t" style="left:84.30px;top:384.90px;width:9.80px;text-align:center;font:9.80px/9.80px 'Liberation Sans','Noto Sans CJK JP',sans-serif;color:#dadada">×</span><span class="t m" style="left:94.10px;top:384.82px;font:10.40px/11.96px 'Liberation Sans',sans-serif;color:#dadada;transform:scaleX(0.8472)">1<i>.</i>00<i>]</i></span><span class="t" style="left:118.60px;top:384.90px;width:9.80px;text-align:center;font:9.80px/9.80px 'Liberation Sans','Noto Sans CJK JP',sans-serif;color:#dadada">－</span><span class="t m" style="left:128.40px;top:384.82px;font:10.40px/11.96px 'Liberation Sans',sans-serif;color:#dadada;transform:scaleX(0.8472)"><i>[</i></span><span class="t" style="left:133.30px;top:384.90px;font:9.80px/9.80px 'Liberation Sans','Noto Sans CJK JP',sans-serif;color:#dadada">白</span><span class="t" style="left:143.10px;top:384.90px;font:9.80px/9.80px 'Liberation Sans','Noto Sans CJK JP',sans-serif;color:#dadada">金</span><span class="t m" style="left:152.90px;top:384.82px;font:10.40px/11.96px 'Liberation Sans',sans-serif;color:#dadada;transform:scaleX(0.8472)"><i>&nbsp;</i>25<i>/</i>08<i>&nbsp;</i>4<i>,</i>328</span><span class="t" style="left:211.70px;top:384.90px;width:9.80px;text-align:center;font:9.80px/9.80px 'Liberation Sans','Noto Sans CJK JP',sans-serif;color:#dadada">×</span><span class="t m" style="left:221.50px;top:384.82px;font:10.40px/11.96px 'Liberation Sans',sans-serif;color:#dadada;transform:scaleX(0.8472)">1<i>.</i>00<i>]</i><i>&nbsp;</i></span><span class="t" style="left:250.90px;top:384.90px;font:9.80px/9.80px 'Liberation Sans','Noto Sans CJK JP',sans-serif;color:#dadada">終</span><span class="t" style="left:260.70px;top:384.90px;font:9.80px/9.80px 'Liberation Sans','Noto Sans CJK JP',sans-serif;color:#dadada">値</span><span class="t" style="left:275.40px;top:384.90px;font:9.80px/9.80px 'Liberation Sans','Noto Sans CJK JP',sans-serif;color:#dadada">時</span><span class="t" style="left:285.20px;top:384.90px;font:9.80px/9.80px 'Liberation Sans','Noto Sans CJK JP',sans-serif;color:#dadada">刻</span><span class="t m" style="left:295.00px;top:384.82px;font:10.40px/11.96px 'Liberation Sans',sans-serif;color:#dadada;transform:scaleX(0.8472)"><i>:</i>05<i>:</i>49<i>&nbsp;</i>7<i>,</i>242</span><span class="t m" style="left:972.00px;top:50.10px;font:10.20px/11.73px 'Liberation Sans',sans-serif;color:#d0d0d0;transform:scaleX(0.8638)">11<i>,</i>600</span><span class="t m" style="left:972.00px;top:119.80px;font:10.20px/11.73px 'Liberation Sans',sans-serif;color:#d0d0d0;transform:scaleX(0.8638)">11<i>,</i>550</span><span class="t m" style="left:972.00px;top:154.40px;font:10.20px/11.73px 'Liberation Sans',sans-serif;color:#d0d0d0;transform:scaleX(0.8638)">11<i>,</i>525</span><span class="t m" style="left:972.00px;top:189.20px;font:10.20px/11.73px 'Liberation Sans',sans-serif;color:#d0d0d0;transform:scaleX(0.8638)">11<i>,</i>500</span><span class="t m" style="left:972.00px;top:215.30px;font:10.20px/11.73px 'Liberation Sans',sans-serif;color:#d0d0d0;transform:scaleX(0.8638)">4<i>,</i>375</span><span class="t m" style="left:972.00px;top:264.50px;font:10.20px/11.73px 'Liberation Sans',sans-serif;color:#d0d0d0;transform:scaleX(0.8638)">4<i>,</i>350</span><span class="t m" style="left:972.00px;top:362.10px;font:10.20px/11.73px 'Liberation Sans',sans-serif;color:#d0d0d0;transform:scaleX(0.8638)">4<i>,</i>300</span><span class="t m" style="left:972.00px;top:386.60px;font:10.20px/11.73px 'Liberation Sans',sans-serif;color:#d0d0d0;transform:scaleX(0.8638)">7<i>,</i>250</span><span class="t m" style="left:972.00px;top:436.20px;font:10.20px/11.73px 'Liberation Sans',sans-serif;color:#d0d0d0;transform:scaleX(0.8638)">7<i>,</i>225</span><span class="t m" style="left:972.00px;top:486.30px;font:10.20px/11.73px 'Liberation Sans',sans-serif;color:#d0d0d0;transform:scaleX(0.8638)">7<i>,</i>200</span><span class="t m" style="left:972.00px;top:535.40px;font:10.20px/11.73px 'Liberation Sans',sans-serif;color:#d0d0d0;transform:scaleX(0.8638)">7<i>,</i>175</span><div class="pbox" style="top:86.9px;height:16.8px"></div><span class="t m" style="left:979.70px;top:88.90px;font:bold 10.20px/11.73px 'Liberation Sans',sans-serif;color:#000;transform:scaleX(0.8638)">11<i>,</i>575</span><div class="pbox" style="top:305.8px;height:17.8px"></div><span class="t m" style="left:982.15px;top:308.30px;font:bold 10.20px/11.73px 'Liberation Sans',sans-serif;color:#000;transform:scaleX(0.8638)">4<i>,</i>330</span><div class="pbox" style="top:398.8px;height:17.5px"></div><span class="t m" style="left:982.15px;top:401.15px;font:bold 10.20px/11.73px 'Liberation Sans',sans-serif;color:#000;transform:scaleX(0.8638)">7<i>,</i>245</span><span class="t m" style="left:37.70px;top:188.25px;font:9.60px/11.04px 'Liberation Sans',sans-serif;color:#cfcfcf;transform:scaleX(0.8054)">03</span><span class="t m" style="left:69.70px;top:188.25px;font:9.60px/11.04px 'Liberation Sans',sans-serif;color:#cfcfcf;transform:scaleX(0.8054)">04</span><span class="t m" style="left:97.60px;top:188.25px;font:9.60px/11.04px 'Liberation Sans',sans-serif;color:#cfcfcf;transform:scaleX(0.8054)">05</span><span class="t m" style="left:142.20px;top:188.25px;font:9.60px/11.04px 'Liberation Sans',sans-serif;color:#cfcfcf;transform:scaleX(0.8054)">09</span><span class="t m" style="left:190.00px;top:188.25px;font:9.60px/11.04px 'Liberation Sans',sans-serif;color:#cfcfcf;transform:scaleX(0.8054)">10</span><span class="t m" style="left:238.50px;top:188.25px;font:9.60px/11.04px 'Liberation Sans',sans-serif;color:#cfcfcf;transform:scaleX(0.8054)">11</span><span class="t m" style="left:285.40px;top:188.25px;font:9.60px/11.04px 'Liberation Sans',sans-serif;color:#cfcfcf;transform:scaleX(0.8054)">12</span><span class="t m" style="left:332.50px;top:188.25px;font:9.60px/11.04px 'Liberation Sans',sans-serif;color:#cfcfcf;transform:scaleX(0.8054)">13</span><span class="t m" style="left:377.80px;top:188.25px;font:9.60px/11.04px 'Liberation Sans',sans-serif;color:#cfcfcf;transform:scaleX(0.8054)">14</span><span class="t m" style="left:433.20px;top:188.25px;font:9.60px/11.04px 'Liberation Sans',sans-serif;color:#cfcfcf;transform:scaleX(0.8054)">16</span><span class="t m" style="left:457.80px;top:188.25px;font:9.60px/11.04px 'Liberation Sans',sans-serif;color:#cfcfcf;transform:scaleX(0.8054)">17</span><span class="t m" style="left:505.70px;top:188.25px;font:9.60px/11.04px 'Liberation Sans',sans-serif;color:#cfcfcf;transform:scaleX(0.8054)">18</span><span class="t m" style="left:553.30px;top:188.25px;font:9.60px/11.04px 'Liberation Sans',sans-serif;color:#cfcfcf;transform:scaleX(0.8054)">19</span><span class="t m" style="left:598.10px;top:188.25px;font:9.60px/11.04px 'Liberation Sans',sans-serif;color:#cfcfcf;transform:scaleX(0.8054)">20</span><span class="t m" style="left:636.30px;top:188.25px;font:9.60px/11.04px 'Liberation Sans',sans-serif;color:#cfcfcf;transform:scaleX(0.8054)">21</span><span class="t m" style="left:681.50px;top:188.25px;font:9.60px/11.04px 'Liberation Sans',sans-serif;color:#cfcfcf;transform:scaleX(0.8054)">22</span><span class="t m" style="left:730.20px;top:188.25px;font:9.60px/11.04px 'Liberation Sans',sans-serif;color:#cfcfcf;transform:scaleX(0.8054)">23</span><span class="t m" style="left:778.70px;top:188.25px;font:9.60px/11.04px 'Liberation Sans',sans-serif;color:#cfcfcf;transform:scaleX(0.8054)">00</span><span class="t m" style="left:826.30px;top:188.25px;font:9.60px/11.04px 'Liberation Sans',sans-serif;color:#cfcfcf;transform:scaleX(0.8054)">01</span><span class="t m" style="left:863.50px;top:188.25px;font:9.60px/11.04px 'Liberation Sans',sans-serif;color:#cfcfcf;transform:scaleX(0.8054)">02</span><span class="t m" style="left:898.50px;top:188.25px;font:9.60px/11.04px 'Liberation Sans',sans-serif;color:#cfcfcf;transform:scaleX(0.8054)">03</span><span class="t m" style="left:923.40px;top:188.25px;font:9.60px/11.04px 'Liberation Sans',sans-serif;color:#cfcfcf;transform:scaleX(0.8054)">04</span><span class="t m" style="left:949.60px;top:188.25px;font:9.60px/11.04px 'Liberation Sans',sans-serif;color:#cfcfcf;transform:scaleX(0.8054)">05</span><span class="t m" style="left:116.00px;top:188.25px;font:bold 9.60px/11.04px 'Liberation Sans',sans-serif;color:#fff;transform:scaleX(0.8054)">06</span><span class="t m" style="left:412.20px;top:188.25px;font:9.60px/11.04px 'Liberation Sans',sans-serif;color:#cfcfcf;transform:scaleX(0.8054)">15</span><span class="t m" style="left:957.00px;top:188.25px;font:9.60px/11.04px 'Liberation Sans',sans-serif;color:#cfcfcf;transform:scaleX(0.7679)">06</span><span class="t m" style="left:778.90px;top:175.25px;font:9.60px/11.04px 'Liberation Sans',sans-serif;color:#cfcfcf;transform:scaleX(0.8054)">11</span><span class="t m" style="left:37.70px;top:366.45px;font:9.60px/11.04px 'Liberation Sans',sans-serif;color:#cfcfcf;transform:scaleX(0.8054)">03</span><span class="t m" style="left:69.70px;top:366.45px;font:9.60px/11.04px 'Liberation Sans',sans-serif;color:#cfcfcf;transform:scaleX(0.8054)">04</span><span class="t m" style="left:97.60px;top:366.45px;font:9.60px/11.04px 'Liberation Sans',sans-serif;color:#cfcfcf;transform:scaleX(0.8054)">05</span><span class="t m" style="left:142.20px;top:366.45px;font:9.60px/11.04px 'Liberation Sans',sans-serif;color:#cfcfcf;transform:scaleX(0.8054)">09</span><span class="t m" style="left:190.00px;top:366.45px;font:9.60px/11.04px 'Liberation Sans',sans-serif;color:#cfcfcf;transform:scaleX(0.8054)">10</span><span class="t m" style="left:238.50px;top:366.45px;font:9.60px/11.04px 'Liberation Sans',sans-serif;color:#cfcfcf;transform:scaleX(0.8054)">11</span><span class="t m" style="left:285.40px;top:366.45px;font:9.60px/11.04px 'Liberation Sans',sans-serif;color:#cfcfcf;transform:scaleX(0.8054)">12</span><span class="t m" style="left:332.50px;top:366.45px;font:9.60px/11.04px 'Liberation Sans',sans-serif;color:#cfcfcf;transform:scaleX(0.8054)">13</span><span class="t m" style="left:377.80px;top:366.45px;font:9.60px/11.04px 'Liberation Sans',sans-serif;color:#cfcfcf;transform:scaleX(0.8054)">14</span><span class="t m" style="left:433.20px;top:366.45px;font:9.60px/11.04px 'Liberation Sans',sans-serif;color:#cfcfcf;transform:scaleX(0.8054)">16</span><span class="t m" style="left:457.80px;top:366.45px;font:9.60px/11.04px 'Liberation Sans',sans-serif;color:#cfcfcf;transform:scaleX(0.8054)">17</span><span class="t m" style="left:505.70px;top:366.45px;font:9.60px/11.04px 'Liberation Sans',sans-serif;color:#cfcfcf;transform:scaleX(0.8054)">18</span><span class="t m" style="left:553.30px;top:366.45px;font:9.60px/11.04px 'Liberation Sans',sans-serif;color:#cfcfcf;transform:scaleX(0.8054)">19</span><span class="t m" style="left:598.10px;top:366.45px;font:9.60px/11.04px 'Liberation Sans',sans-serif;color:#cfcfcf;transform:scaleX(0.8054)">20</span><span class="t m" style="left:636.30px;top:366.45px;font:9.60px/11.04px 'Liberation Sans',sans-serif;color:#cfcfcf;transform:scaleX(0.8054)">21</span><span class="t m" style="left:681.50px;top:366.45px;font:9.60px/11.04px 'Liberation Sans',sans-serif;color:#cfcfcf;transform:scaleX(0.8054)">22</span><span class="t m" style="left:730.20px;top:366.45px;font:9.60px/11.04px 'Liberation Sans',sans-serif;color:#cfcfcf;transform:scaleX(0.8054)">23</span><span class="t m" style="left:778.70px;top:366.45px;font:9.60px/11.04px 'Liberation Sans',sans-serif;color:#cfcfcf;transform:scaleX(0.8054)">00</span><span class="t m" style="left:826.30px;top:366.45px;font:9.60px/11.04px 'Liberation Sans',sans-serif;color:#cfcfcf;transform:scaleX(0.8054)">01</span><span class="t m" style="left:863.50px;top:366.45px;font:9.60px/11.04px 'Liberation Sans',sans-serif;color:#cfcfcf;transform:scaleX(0.8054)">02</span><span class="t m" style="left:898.50px;top:366.45px;font:9.60px/11.04px 'Liberation Sans',sans-serif;color:#cfcfcf;transform:scaleX(0.8054)">03</span><span class="t m" style="left:923.40px;top:366.45px;font:9.60px/11.04px 'Liberation Sans',sans-serif;color:#cfcfcf;transform:scaleX(0.8054)">04</span><span class="t m" style="left:949.60px;top:366.45px;font:9.60px/11.04px 'Liberation Sans',sans-serif;color:#cfcfcf;transform:scaleX(0.8054)">05</span><span class="t m" style="left:116.00px;top:366.45px;font:bold 9.60px/11.04px 'Liberation Sans',sans-serif;color:#fff;transform:scaleX(0.8054)">06</span><span class="t m" style="left:412.20px;top:366.45px;font:9.60px/11.04px 'Liberation Sans',sans-serif;color:#cfcfcf;transform:scaleX(0.8054)">15</span><span class="t m" style="left:957.00px;top:366.45px;font:9.60px/11.04px 'Liberation Sans',sans-serif;color:#cfcfcf;transform:scaleX(0.7679)">06</span><span class="t m" style="left:778.90px;top:353.45px;font:9.60px/11.04px 'Liberation Sans',sans-serif;color:#cfcfcf;transform:scaleX(0.8054)">11</span><span class="t m" style="left:37.70px;top:533.15px;font:9.60px/11.04px 'Liberation Sans',sans-serif;color:#cfcfcf;transform:scaleX(0.8054)">03</span><span class="t m" style="left:69.70px;top:533.15px;font:9.60px/11.04px 'Liberation Sans',sans-serif;color:#cfcfcf;transform:scaleX(0.8054)">04</span><span class="t m" style="left:97.60px;top:533.15px;font:9.60px/11.04px 'Liberation Sans',sans-serif;color:#cfcfcf;transform:scaleX(0.8054)">05</span><span class="t m" style="left:142.20px;top:533.15px;font:9.60px/11.04px 'Liberation Sans',sans-serif;color:#cfcfcf;transform:scaleX(0.8054)">09</span><span class="t m" style="left:190.00px;top:533.15px;font:9.60px/11.04px 'Liberation Sans',sans-serif;color:#cfcfcf;transform:scaleX(0.8054)">10</span><span class="t m" style="left:238.50px;top:533.15px;font:9.60px/11.04px 'Liberation Sans',sans-serif;color:#cfcfcf;transform:scaleX(0.8054)">11</span><span class="t m" style="left:285.40px;top:533.15px;font:9.60px/11.04px 'Liberation Sans',sans-serif;color:#cfcfcf;transform:scaleX(0.8054)">12</span><span class="t m" style="left:332.50px;top:533.15px;font:9.60px/11.04px 'Liberation Sans',sans-serif;color:#cfcfcf;transform:scaleX(0.8054)">13</span><span class="t m" style="left:377.80px;top:533.15px;font:9.60px/11.04px 'Liberation Sans',sans-serif;color:#cfcfcf;transform:scaleX(0.8054)">14</span><span class="t m" style="left:433.20px;top:533.15px;font:9.60px/11.04px 'Liberation Sans',sans-serif;color:#cfcfcf;transform:scaleX(0.8054)">16</span><span class="t m" style="left:457.80px;top:533.15px;font:9.60px/11.04px 'Liberation Sans',sans-serif;color:#cfcfcf;transform:scaleX(0.8054)">17</span><span class="t m" style="left:505.70px;top:533.15px;font:9.60px/11.04px 'Liberation Sans',sans-serif;color:#cfcfcf;transform:scaleX(0.8054)">18</span><span class="t m" style="left:553.30px;top:533.15px;font:9.60px/11.04px 'Liberation Sans',sans-serif;color:#cfcfcf;transform:scaleX(0.8054)">19</span><span class="t m" style="left:598.10px;top:533.15px;font:9.60px/11.04px 'Liberation Sans',sans-serif;color:#cfcfcf;transform:scaleX(0.8054)">20</span><span class="t m" style="left:636.30px;top:533.15px;font:9.60px/11.04px 'Liberation Sans',sans-serif;color:#cfcfcf;transform:scaleX(0.8054)">21</span><span class="t m" style="left:681.50px;top:533.15px;font:9.60px/11.04px 'Liberation Sans',sans-serif;color:#cfcfcf;transform:scaleX(0.8054)">22</span><span class="t m" style="left:730.20px;top:533.15px;font:9.60px/11.04px 'Liberation Sans',sans-serif;color:#cfcfcf;transform:scaleX(0.8054)">23</span><span class="t m" style="left:778.70px;top:533.15px;font:9.60px/11.04px 'Liberation Sans',sans-serif;color:#cfcfcf;transform:scaleX(0.8054)">00</span><span class="t m" style="left:826.30px;top:533.15px;font:9.60px/11.04px 'Liberation Sans',sans-serif;color:#cfcfcf;transform:scaleX(0.8054)">01</span><span class="t m" style="left:863.50px;top:533.15px;font:9.60px/11.04px 'Liberation Sans',sans-serif;color:#cfcfcf;transform:scaleX(0.8054)">02</span><span class="t m" style="left:898.50px;top:533.15px;font:9.60px/11.04px 'Liberation Sans',sans-serif;color:#cfcfcf;transform:scaleX(0.8054)">03</span><span class="t m" style="left:923.40px;top:533.15px;font:9.60px/11.04px 'Liberation Sans',sans-serif;color:#cfcfcf;transform:scaleX(0.8054)">04</span><span class="t m" style="left:949.60px;top:533.15px;font:9.60px/11.04px 'Liberation Sans',sans-serif;color:#cfcfcf;transform:scaleX(0.8054)">05</span><span class="t m" style="left:116.00px;top:533.15px;font:bold 9.60px/11.04px 'Liberation Sans',sans-serif;color:#fff;transform:scaleX(0.8054)">06</span><span class="t m" style="left:412.20px;top:533.15px;font:9.60px/11.04px 'Liberation Sans',sans-serif;color:#cfcfcf;transform:scaleX(0.8054)">15</span><span class="t m" style="left:957.00px;top:533.15px;font:9.60px/11.04px 'Liberation Sans',sans-serif;color:#cfcfcf;transform:scaleX(0.7679)">06</span><span class="t m" style="left:778.90px;top:520.15px;font:9.60px/11.04px 'Liberation Sans',sans-serif;color:#cfcfcf;transform:scaleX(0.8054)">11</span>
</body></html>
